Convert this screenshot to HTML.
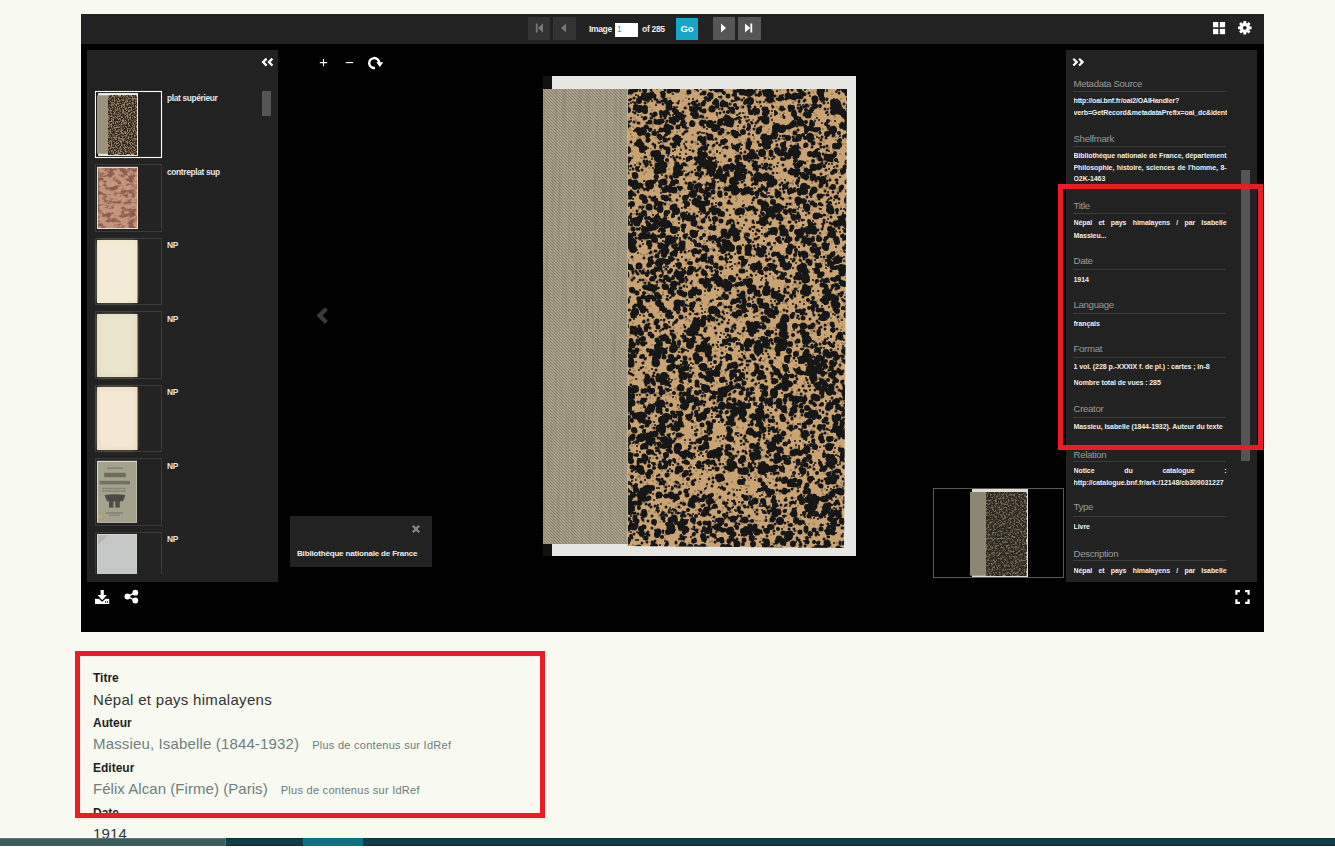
<!DOCTYPE html>
<html><head><meta charset="utf-8">
<style>
*{box-sizing:border-box;margin:0;padding:0}
html,body{width:1335px;height:851px;overflow:hidden;background:#f8f9f0;font-family:"Liberation Sans",sans-serif}
.a{position:absolute}
#frame{left:81px;top:14px;width:1183px;height:618px;background:#000}
#tb{left:81px;top:14px;width:1183px;height:30px;background:#222}
.btn{top:17px;width:22px;height:23px}
.dis{background:#333}
.en{background:#555}
#lp{left:87px;top:50px;width:191px;height:532px;background:#222}
#rp{left:1066px;top:50px;width:191px;height:532px;background:#222}
.tbox{left:95px;width:67px;height:67px;border:1px solid #3a3a3a}
.timg{left:97px;width:41px;height:63px}
.tlab{left:167px;margin-top:0.5px;font-size:8.4px;font-weight:bold;color:#e6e6e6;letter-spacing:-0.35px}
.red{border:5px solid #ed1c24}
.ml{left:7.5px;font-size:9.6px;color:#9a9a9a;letter-spacing:-0.3px;white-space:nowrap}
.mv{left:7.5px;width:153px;font-size:7px;font-weight:bold;color:#eee;line-height:11.5px;white-space:nowrap;overflow:hidden;letter-spacing:-0.07px}
.j{text-align:justify;text-align-last:justify}
.bl{left:93px;font-size:12px;font-weight:bold;color:#1e1e1e}
.bv{left:93px;font-size:15px;color:#333;letter-spacing:0.15px;white-space:nowrap}
.bt{color:#6e7f80}
.idref{font-size:11px;color:#6b7b7b;letter-spacing:0.27px}
</style></head><body>
<div id="frame" class="a"></div>
<div id="tb" class="a"></div>
<!-- nav buttons -->
<div class="a btn dis" style="left:528px"></div>
<div class="a btn dis" style="left:553px;width:23px"></div>
<div class="a btn en" style="left:713px"></div>
<div class="a btn en" style="left:738px;width:23px"></div>
<svg class="a" style="left:0;top:0" width="1335" height="60">
  <!-- first -->
  <rect x="535.8" y="23.5" width="1.8" height="9" fill="#777"/>
  <path d="M543 23.5 L537.8 28 L543 32.5Z" fill="#777"/>
  <!-- prev -->
  <path d="M566 23.5 L561 28 L566 32.5Z" fill="#777"/>
  <!-- next -->
  <path d="M721 23.5 L726 28 L721 32.5Z" fill="#fff"/>
  <!-- last -->
  <path d="M745 23.5 L750.2 28 L745 32.5Z" fill="#fff"/>
  <rect x="750.4" y="23.5" width="1.8" height="9" fill="#fff"/>
  <!-- grid -->
  <rect x="1213" y="22" width="5.3" height="5.3" fill="#fff"/>
  <rect x="1219.8" y="22" width="5.3" height="5.3" fill="#fff"/>
  <rect x="1213" y="28.9" width="5.3" height="5.3" fill="#fff"/>
  <rect x="1219.8" y="28.9" width="5.3" height="5.3" fill="#fff"/>
  <g transform="translate(1244.8,27.8)">
    <path fill="#fff" fill-rule="evenodd" d="M-1.48 -4.78 L-1.37 -6.76 L1.37 -6.76 L1.48 -4.78 L2.33 -4.42 L3.81 -5.75 L5.75 -3.81 L4.42 -2.33 L4.78 -1.48 L6.76 -1.37 L6.76 1.37 L4.78 1.48 L4.42 2.33 L5.75 3.81 L3.81 5.75 L2.33 4.42 L1.48 4.78 L1.37 6.76 L-1.37 6.76 L-1.48 4.78 L-2.33 4.42 L-3.81 5.75 L-5.75 3.81 L-4.42 2.33 L-4.78 1.48 L-6.76 1.37 L-6.76 -1.37 L-4.78 -1.48 L-4.42 -2.33 L-5.75 -3.81 L-3.81 -5.75 L-2.33 -4.42Z M1.9 0 A1.9 1.9 0 1 0 -1.9 0 A1.9 1.9 0 1 0 1.9 0Z"/>
  </g>
</svg>
<div class="a" style="left:589px;top:24px;font-size:8.5px;font-weight:bold;color:#eee;letter-spacing:-0.35px">Image</div>
<div class="a" style="left:615px;top:23px;width:23px;height:14px;background:#fff;font-size:8.5px;color:#888;padding-left:2px;line-height:13px">1</div>
<div class="a" style="left:642px;top:24px;font-size:8.5px;font-weight:bold;color:#eee;letter-spacing:-0.3px">of 285</div>
<div class="a" style="left:676px;top:18px;width:22px;height:22px;background:#14a5c9;color:#fff;font-size:9.5px;font-weight:bold;text-align:center;line-height:22px">Go</div>

<div id="lp" class="a"></div>
<div id="rp" class="a"></div>
<div class="a" style="left:1066px;top:50px;width:191px;height:532px;overflow:hidden">
<div class="a ml" style="top:27.9px">Metadata Source</div>
<div class="a" style="left:7px;top:41px;width:153px;height:1px;background:#3c3c3c"></div>
<div class="a mv" style="top:44.7px;letter-spacing:-0.13px">http://oai.bnf.fr/oai2/OAIHandler?</div>
<div class="a mv" style="top:56.5px;letter-spacing:-0.1px">verb=GetRecord&amp;metadataPrefix=oai_dc&amp;identifier=ark:/12148/cb309031227</div>
<div class="a ml" style="top:83.1px">Shelfmark</div>
<div class="a" style="left:7px;top:96px;width:153px;height:1px;background:#3c3c3c"></div>
<div class="a mv j" style="top:100.2px">Bibliothèque nationale de France, département</div>
<div class="a mv j" style="top:111.7px">Philosophie, histoire, sciences de l'homme, 8-</div>
<div class="a mv" style="top:123.2px">O2K-1463</div>
<div class="a ml" style="top:150.2px">Title</div>
<div class="a" style="left:7px;top:163px;width:153px;height:1px;background:#3c3c3c"></div>
<div class="a mv j" style="top:167.2px">Népal et pays himalayens / par Isabelle</div>
<div class="a mv" style="top:179.7px">Massieu...</div>
<div class="a ml" style="top:205.2px">Date</div>
<div class="a" style="left:7px;top:219px;width:153px;height:1px;background:#3c3c3c"></div>
<div class="a mv" style="top:223.8px">1914</div>
<div class="a ml" style="top:249.2px">Language</div>
<div class="a" style="left:7px;top:263px;width:153px;height:1px;background:#3c3c3c"></div>
<div class="a mv" style="top:267.6px">français</div>
<div class="a ml" style="top:293.2px">Format</div>
<div class="a" style="left:7px;top:307px;width:153px;height:1px;background:#3c3c3c"></div>
<div class="a mv" style="top:311.4px">1 vol. (228 p.-XXXIX f. de pl.) : cartes ; in-8</div>
<div class="a mv" style="top:326.5px">Nombre total de vues : 285</div>
<div class="a ml" style="top:353.2px">Creator</div>
<div class="a" style="left:7px;top:367px;width:153px;height:1px;background:#3c3c3c"></div>
<div class="a mv" style="top:370.6px">Massieu, Isabelle (1844-1932). Auteur du texte</div>
<div class="a ml" style="top:399.2px">Relation</div>
<div class="a" style="left:7px;top:411px;width:153px;height:1px;background:#3c3c3c"></div>
<div class="a mv j" style="top:414.5px">Notice du catalogue :</div>
<div class="a mv" style="top:426.8px">http://catalogue.bnf.fr/ark:/12148/cb309031227</div>
<div class="a ml" style="top:451.2px">Type</div>
<div class="a" style="left:7px;top:466px;width:153px;height:1px;background:#3c3c3c"></div>
<div class="a mv" style="top:470.7px">Livre</div>
<div class="a ml" style="top:498.4px">Description</div>
<div class="a" style="left:7px;top:510px;width:153px;height:1px;background:#3c3c3c"></div>
<div class="a mv j" style="top:514.8px">Népal et pays himalayens / par Isabelle</div>
<div class="a" style="left:175px;top:120px;width:9px;height:291px;background:#555"></div>
</div>
<!-- LEFT PANEL -->
<svg class="a" style="left:0;top:0" width="400" height="640">
  <defs>
    <filter color-interpolation-filters="sRGB" id="mm" x="0" y="0" width="100%" height="100%">
      <feTurbulence type="fractalNoise" baseFrequency="0.7" numOctaves="2" seed="4"/>
      <feColorMatrix type="matrix" values="0 0 0 0 0.16  0 0 0 0 0.14  0 0 0 0 0.12  -5 0 0 0 3.1"/>
    </filter>
    <filter color-interpolation-filters="sRGB" id="pm" x="0" y="0" width="100%" height="100%">
      <feTurbulence type="fractalNoise" baseFrequency="0.14 0.22" numOctaves="3" seed="9"/>
      <feColorMatrix type="matrix" values="0 0 0 0 0.56  0 0 0 0 0.36  0 0 0 0 0.29  -5 0 0 0 2.75"/>
    </filter>
    <filter id="sf" x="-20%" y="-20%" width="140%" height="140%"><feGaussianBlur stdDeviation="2.5"/></filter>
  </defs>
  <!-- collapse << -->
  <path d="M266.6 58.6 L263.1 62.1 L266.6 65.6 M272.4 58.6 L268.9 62.1 L272.4 65.6" stroke="#fff" stroke-width="2.2" fill="none"/>
  <!-- scrollbar -->
  <rect x="262" y="91" width="9" height="25" fill="#555"/>
  <!-- thumb 1 -->
  <rect x="95.5" y="91.5" width="66" height="66" fill="none" stroke="#fff" stroke-width="1.1"/>
  <rect x="97" y="93" width="41" height="63" fill="#e9e7e1"/>
  <rect x="96.6" y="93" width="1.5" height="63" fill="#111"/>
  <rect x="97" y="95.3" width="11" height="58.5" fill="#9a927c"/>
  <rect x="108" y="95.3" width="29" height="59.2" fill="#9c8060"/>
  <rect x="108" y="95.3" width="29" height="59.2" filter="url(#mm)"/>
  <!-- thumb 2 -->
  <rect x="95.5" y="164.5" width="66" height="67" fill="none" stroke="#3a3a3a"/>
  <rect x="97" y="166.8" width="41" height="62.2" fill="#e2ddd2"/>
  <rect x="98" y="168" width="39" height="60" fill="#c49680"/>
  <rect x="98" y="168" width="39" height="60" filter="url(#pm)"/>
  <rect x="98" y="170" width="1" height="40" fill="#6a5a52" opacity="0.6"/>
  <!-- thumb 3 -->
  <rect x="95.5" y="238.5" width="66" height="66" fill="none" stroke="#3a3a3a"/>
  <rect x="97" y="240" width="40.5" height="63" fill="#f0e6c9"/>
  <rect x="99" y="242" width="36" height="59" fill="#f4ecd8" filter="url(#sf)"/>
  <!-- thumb 4 -->
  <rect x="95.5" y="311.5" width="66" height="67" fill="none" stroke="#3a3a3a"/>
  <rect x="97" y="314" width="40.5" height="63" fill="#e5dcbc"/>
  <rect x="99" y="316" width="36" height="59" fill="#ebe5ce" filter="url(#sf)"/>
  <!-- thumb 5 -->
  <rect x="95.5" y="385.5" width="66" height="66" fill="none" stroke="#3a3a3a"/>
  <rect x="97" y="387" width="40.5" height="63" fill="#f0dcc2"/>
  <rect x="99" y="389" width="36" height="59" fill="#f4e8d4" filter="url(#sf)"/>
  <!-- thumb 6 -->
  <rect x="95.5" y="458.5" width="66" height="67" fill="none" stroke="#3a3a3a"/>
  <rect x="97" y="460.8" width="40" height="62" fill="#d8d6cc"/>
  <rect x="98" y="462" width="38.5" height="60" fill="#a3a28c"/>
  <rect x="107" y="467.5" width="16" height="1.2" fill="#7a7866"/>
  <rect x="104.2" y="472.8" width="21.6" height="4.4" fill="#6e6c5c"/>
  <rect x="99.5" y="480.8" width="30.5" height="3.6" fill="#727060"/>
  <rect x="102" y="487.8" width="24" height="1.4" fill="#85837a"/>
  <rect x="102" y="490.4" width="24" height="1.4" fill="#85837a"/>
  <path d="M104.6 495 Q115 493.5 125.4 495 L123 501.2 H107Z" fill="#4a4a44"/>
  <rect x="109" y="501" width="4.5" height="6.6" fill="#4e4e48"/>
  <rect x="115.3" y="501" width="4.5" height="6.6" fill="#4e4e48"/>
  <rect x="106" y="512.3" width="17" height="1.3" fill="#7e7c6e"/>
  <rect x="109" y="514.6" width="11" height="1.2" fill="#85837a"/>
  <circle cx="100.3" cy="516.4" r="2.2" fill="#c9a46c"/>
  <!-- thumb 7 -->
  <path d="M95.5 574 V532.5 H161.5 V574" fill="none" stroke="#3a3a3a"/>
  <rect x="97" y="534" width="40" height="40" fill="#d9d6ca"/><rect x="98" y="535" width="38.5" height="39" fill="#c4c7c5"/><path d="M98 535 L108 535 L98 545Z" fill="#b0aa9c" opacity="0.6"/>
</svg>
<div class="a tlab" style="top:92px">plat supérieur</div>
<div class="a tlab" style="top:166px">contreplat sup</div>
<div class="a tlab" style="top:239px">NP</div>
<div class="a tlab" style="top:313px">NP</div>
<div class="a tlab" style="top:386px">NP</div>
<div class="a tlab" style="top:460px">NP</div>
<div class="a tlab" style="top:533px">NP</div>

<!-- VIEWER CONTROLS -->
<svg class="a" style="left:300px;top:50px" width="60" height="25">
  <path d="M19.8 12.6 h7.4 M23.5 8.9 v7.4" stroke="#fff" stroke-width="1.1" fill="none"/>
  <path d="M45.8 12.6 h7.4" stroke="#fff" stroke-width="1.1" fill="none"/>
</svg>
<svg class="a" style="left:366.6px;top:55px" width="18" height="17">
  <path d="M12.2 8 A5 5 0 1 0 8 13" stroke="#fff" stroke-width="2.4" fill="none"/>
  <path d="M9.3 7.2 L16.3 7.2 L12.8 11.9Z" fill="#fff"/>
</svg>
<!-- chevron left -->
<svg class="a" style="left:310px;top:300px" width="25" height="30">
  <path d="M16.4 8.7 L9.5 15.6 L16.4 22.5" stroke="#3a3a3a" stroke-width="4.2" fill="none"/>
</svg>

<!-- BOOK IMAGE -->
<svg class="a" style="left:543px;top:76px" width="313" height="480">
  <defs>
    <filter color-interpolation-filters="sRGB" id="ln" x="0" y="0" width="100%" height="100%">
      <feTurbulence type="fractalNoise" baseFrequency="0.35 0.012" numOctaves="2" seed="2"/>
      <feColorMatrix type="matrix" values="0 0 0 0 0.3  0 0 0 0 0.28  0 0 0 0 0.22  -0.4 0 0 0 0.22"/>
    </filter>
    <clipPath id="cp"><path d="M85 13 L304 13 L301 472 L85 470Z"/></clipPath>
    <filter id="bl" x="-2%" y="-2%" width="104%" height="104%"><feGaussianBlur stdDeviation="0.45"/></filter>
  </defs>
  <rect x="0" y="0" width="313" height="480" fill="#e6e6e3"/>
  <rect x="0" y="0" width="9" height="13" fill="#111"/>
  <rect x="0" y="468" width="9" height="12" fill="#111"/>
  <pattern id="wv" width="3" height="3" patternUnits="userSpaceOnUse"><rect width="3" height="3" fill="#a49c84"/><rect width="1" height="1" fill="#8c8470"/><rect x="1" y="1" width="1" height="1" fill="#8c8470"/><rect x="2" y="2" width="1" height="1" fill="#8c8470"/><rect x="2" y="0" width="1" height="1" fill="#b2aa94"/><rect x="0" y="1" width="1" height="1" fill="#b2aa94"/></pattern>
  <rect x="0" y="13" width="84.5" height="455" fill="url(#wv)"/>
  <rect x="0" y="13" width="84.5" height="455" filter="url(#ln)"/>
  <path d="M84.5 13 L304 13 L301 472 L84.5 470Z" fill="#c9a372"/>
  <g clip-path="url(#cp)"><g filter="url(#bl)"><g transform="translate(84,12)" stroke="#131418" stroke-linecap="round" fill="none">
<path d="M179 378h0M156 215h0M10 291h0M24 77h0M62 172h0M198 132h0M104 47h0M46 400h0M132 323h0M96 49h0M197 73h0M88 156h0M142 307h0M39 312h0M8 418h0M165 95h0M107 434h0M172 230h0M3 387h0M85 110h0M0 287h0M161 333h0M110 176h0M218 268h0M192 395h0M16 395h0M219 164h0M38 291h0M89 279h0M106 373h0M56 72h0M88 263h0M195 401h0M156 63h0M47 150h0M76 87h0M125 161h0M119 61h0M211 258h0M141 69h0M70 80h0M208 267h0M107 317h0M114 417h0M108 199h0M121 99h0M2 73h0M77 134h0M64 208h0M63 171h0M10 96h0M100 163h0M203 90h0M33 11h0M57 224h0M91 189h0M182 436h0M178 46h0M134 367h0M61 292h0M30 81h0M206 62h0M59 408h0M185 241h0M82 351h0M79 113h0M72 285h0M143 54h0M187 185h0M194 310h0M74 49h0M110 200h0M7 221h0M4 32h0M25 326h0M149 417h0M11 147h0M92 209h0M119 174h0M115 436h0M77 96h0M88 239h0M192 363h0M193 159h0M198 401h0M63 333h0M145 436h0M190 294h0M180 187h0M147 228h0M185 245h0M52 320h0M94 324h0M79 422h0M205 154h0M174 26h0M211 12h0M96 101h0M72 377h0M41 74h0M18 388h0M10 329h0M146 0h0M44 239h0M81 320h0M109 72h0M199 12h0M127 422h0M112 208h0M8 327h0M197 297h0M144 158h0M206 350h0M91 439h0M121 202h0M90 392h0M116 356h0M25 274h0M122 417h0M152 189h0M157 25h0M220 283h0M77 156h0M200 237h0M61 442h0M51 1h0M61 286h0M49 141h0M119 373h0M145 43h0M200 128h0M157 166h0M75 344h0M19 214h0M138 53h0M93 227h0M6 414h0M30 139h0M118 417h0M148 51h0M190 359h0M38 94h0M214 193h0M197 212h0M156 280h0M191 98h0M128 299h0M20 152h0M102 371h0M97 395h0M118 397h0M84 110h0M58 367h0M52 381h0M134 108h0M26 165h0M80 384h0M125 127h0M185 361h0M64 248h0M53 225h0M79 3h0M153 212h0M208 40h0M133 237h0M45 34h0M1 386h0M112 330h0M168 13h0M164 64h0M63 256h0M43 330h0M44 306h0M89 21h0M51 139h0M90 295h0M149 383h0M176 187h0M215 255h0M87 66h0M169 277h0M55 273h0M73 405h0M148 336h0M23 19h0M119 208h0M193 276h0M35 305h0M93 160h0M56 392h0M78 155h0M119 360h0M201 346h0M125 161h0M72 403h0M41 383h0M90 316h0M140 454h0M63 19h0M197 272h0M11 389h0M108 259h0M195 100h0M155 432h0M83 198h0M40 196h0M187 193h0M152 85h0M2 348h0M34 62h0M213 422h0M66 77h0M10 220h0M41 109h0M210 101h0M215 412h0M94 386h0M183 167h0M40 182h0M43 228h0M123 0h0M69 321h0M154 358h0M37 103h0M213 321h0M153 2h0M213 386h0M186 9h0M41 273h0M160 60h0M193 439h0M176 120h0M166 86h0M146 189h0M122 12h0M162 98h0M146 418h0M90 454h0M176 355h0M59 232h0M141 44h0M139 433h0M168 172h0M103 29h0M151 343h0M81 83h0M140 338h0M51 217h0M85 50h0M60 397h0M18 392h0M9 439h0M164 122h0M207 269h0M184 243h0M196 5h0M29 155h0M124 74h0M197 215h0M149 211h0M169 122h0M109 220h0M22 315h0M104 213h0M150 8h0M13 390h0M136 336h0M84 329h0M209 49h0M129 12h0M135 340h0M8 356h0M88 450h0M12 74h0M65 359h0M108 284h0M206 181h0M110 178h0M42 302h0M44 315h0M212 234h0M217 172h0M59 18h0M91 306h0M140 351h0M188 136h0M151 339h0M151 343h0M106 402h0M23 193h0M134 108h0M97 156h0M139 184h0M12 388h0M22 373h0M26 36h0M18 339h0M89 20h0M197 199h0M210 305h0M22 38h0M55 450h0M62 117h0M141 253h0M113 215h0M98 426h0M220 133h0M59 176h0M163 442h0M159 68h0M107 453h0M216 314h0M209 156h0M122 35h0M206 60h0M51 306h0M188 47h0M152 262h0M97 377h0M174 243h0M161 219h0M84 168h0M95 380h0M114 72h0M59 161h0M81 217h0M179 438h0M202 154h0M166 15h0M62 232h0M99 177h0M179 175h0M130 256h0M191 44h0M121 302h0M75 311h0M6 138h0M115 246h0M204 178h0M32 80h0M99 78h0M199 13h0M44 461h0M143 15h0M194 271h0M162 275h0M170 68h0M1 33h0M114 205h0M66 47h0M43 386h0M30 377h0M81 273h0M7 30h0M1 452h0M140 148h0M196 184h0M122 374h0M117 296h0M73 425h0M31 425h0M32 314h0M61 88h0M178 55h0M56 268h0M202 26h0M203 280h0M88 432h0M118 120h0M222 203h0M45 461h0M186 351h0M147 404h0M195 403h0M11 458h0M120 304h0M206 119h0M169 120h0M200 145h0M212 434h0M122 121h0M71 194h0M167 101h0M74 30h0M219 56h0M169 55h0M221 104h0M75 282h0M81 13h0M52 371h0M60 198h0M185 122h0M56 280h0M157 419h0M22 283h0M101 101h0M147 312h0M5 189h0M41 212h0M21 51h0M102 384h0M51 3h0M48 24h0M175 100h0M16 292h0M172 199h0M53 388h0M137 181h0M26 65h0M150 140h0M208 29h0M16 253h0M209 330h0M190 71h0M63 351h0M37 11h0M125 156h0M75 424h0M163 135h0M5 272h0M42 75h0M153 298h0M32 441h0M9 133h0M114 234h0M158 11h0M143 102h0M90 18h0M31 249h0M20 193h0M190 242h0M21 144h0M17 342h0M121 255h0M62 104h0M30 15h0M123 3h0M90 79h0M197 442h0M190 412h0M26 295h0M87 51h0M100 279h0M61 147h0M29 181h0M214 86h0M142 421h0M59 107h0M207 306h0M68 3h0M94 261h0M78 21h0M48 37h0M202 207h0M208 262h0M172 181h0M16 79h0M189 112h0M132 411h0M38 76h0M25 6h0M43 241h0M197 385h0M80 336h0M68 203h0M166 280h0M65 356h0M45 243h0M162 370h0M40 389h0M141 394h0M2 444h0M205 460h0M9 226h0M182 182h0M19 446h0M38 231h0M164 424h0M192 443h0M45 338h0M73 159h0M180 73h0M142 41h0M77 403h0M86 160h0M117 448h0M63 270h0M127 297h0M135 216h0M221 40h0M94 20h0M28 178h0M102 345h0M204 33h0M193 147h0M29 97h0M18 152h0M111 145h0M134 7h0M20 127h0M149 121h0M142 310h0M78 88h0M4 53h0M83 214h0M17 103h0M215 334h0M206 387h0M155 449h0M60 432h0M187 259h0M59 196h0M117 145h0M136 273h0M74 52h0M79 259h0M69 94h0M128 120h0M36 118h0M218 305h0M168 316h0M214 408h0M126 54h0M160 2h0M182 447h0M38 451h0M52 29h0M25 205h0M213 134h0M96 288h0M81 35h0M29 457h0M221 362h0M111 141h0M208 271h0M4 369h0M12 316h0M128 389h0M92 137h0M57 347h0M199 419h0M35 305h0M58 32h0M134 157h0M174 156h0M72 31h0M38 171h0M137 315h0M166 240h0M173 461h0M204 42h0M39 241h0M162 328h0M27 103h0M71 91h0M117 448h0M150 61h0M182 256h0M189 321h0M73 20h0M36 190h0M39 21h0M138 216h0M184 431h0M120 401h0M45 324h0M92 84h0M6 235h0M83 454h0M193 309h0M202 405h0M162 248h0M131 437h0M12 121h0M149 143h0M124 416h0M69 338h0M9 238h0M154 91h0M131 441h0M83 121h0M132 237h0M159 389h0M47 256h0M17 274h0M216 86h0M133 351h0M178 103h0M144 210h0M167 461h0M3 137h0M175 76h0M75 80h0M165 259h0M150 57h0M212 233h0M59 210h0M183 331h0M9 407h0M60 3h0M152 65h0M14 27h0M195 259h0M124 19h0M17 118h0M149 392h0M14 244h0M90 269h0M38 369h0M139 119h0M132 16h0M136 99h0M185 199h0M84 238h0M176 74h0M71 241h0M102 77h0M48 148h0M69 26h0M207 350h0M9 10h0M99 160h0M167 437h0M123 41h0M11 432h0M144 330h0M119 243h0M209 52h0M6 431h0M144 141h0M25 257h0M98 251h0M107 97h0M84 340h0M96 216h0M64 59h0M35 137h0M212 421h0M68 335h0M51 357h0M198 175h0M30 279h0M110 132h0M25 124h0M177 157h0M54 350h0M186 298h0M5 330h0M222 446h0M146 459h0M208 323h0M86 21h0M28 149h0M50 105h0M112 462h0M143 325h0M21 109h0M196 267h0M202 449h0M137 207h0M185 65h0M112 65h0M72 441h0M120 69h0M10 186h0M118 265h0M117 289h0M184 215h0M18 131h0M57 371h0M15 253h0M222 364h0M164 348h0M14 246h0M73 130h0M83 147h0M63 369h0M106 58h0M45 44h0M162 321h0M164 389h0M137 8h0M215 230h0M209 52h0M214 129h0M165 132h0M204 138h0M13 49h0M221 307h0M217 256h0M179 262h0M85 387h0M20 332h0M42 235h0M192 260h0M163 274h0M169 68h0M97 349h0M151 388h0M57 453h0M214 364h0M104 134h0M83 183h0M211 388h0M18 45h0M187 25h0M164 121h0M142 240h0M78 406h0M221 332h0M1 31h0M159 7h0M99 56h0M131 418h0M154 144h0M127 432h0M154 224h0M179 310h0M120 398h0M180 125h0M94 38h0M2 433h0M216 30h0M176 141h0M121 99h0M16 227h0M79 15h0M28 78h0M181 106h0M159 122h0M43 295h0M181 6h0M168 115h0M49 143h0M58 281h0M221 372h0M180 446h0M64 461h0M219 136h0M34 228h0M4 90h0M166 400h0M158 21h0M169 202h0M146 355h0M114 414h0M126 314h0M174 224h0M140 370h0M219 120h0M98 177h0M89 25h0M141 401h0M20 395h0M57 44h0M97 67h0M168 381h0M138 271h0M156 18h0M34 356h0M203 339h0M172 163h0M191 289h0M120 366h0M41 318h0M157 424h0M177 284h0M14 102h0M7 269h0M212 351h0M42 348h0M148 157h0M95 181h0M98 285h0M182 215h0M158 43h0M45 3h0M78 14h0M158 253h0M204 230h0M26 304h0M31 449h0M130 208h0M214 313h0M127 221h0M212 49h0M74 251h0M108 353h0M21 159h0M154 280h0M27 35h0M76 449h0M123 43h0M135 300h0M15 301h0M215 147h0M202 60h0M190 270h0M18 243h0M148 386h0M131 266h0M222 48h0M95 92h0M64 88h0M86 319h0M204 224h0M7 283h0M169 185h0M47 425h0M169 227h0M162 204h0M49 291h0M137 329h0M37 198h0M140 82h0M14 251h0M115 417h0M7 58h0M181 99h0M107 402h0M25 337h0M36 206h0M95 423h0M48 36h0M20 205h0M165 115h0M103 83h0M10 12h0M73 326h0M22 298h0M159 138h0M100 142h0M158 316h0M115 103h0M174 120h0M73 262h0M82 262h0M156 22h0M221 381h0M139 141h0M96 172h0M28 74h0M22 80h0M201 228h0M75 215h0M214 242h0M69 422h0M147 398h0M26 38h0M20 70h0M90 104h0M181 115h0M158 198h0M182 177h0M67 126h0M134 453h0M204 457h0M125 343h0M190 180h0M113 144h0M84 417h0M138 146h0M108 242h0M175 148h0M181 174h0M106 363h0M214 163h0M161 271h0M144 128h0M12 176h0M29 130h0M185 343h0M114 54h0M180 428h0M99 196h0M193 396h0M72 158h0M141 145h0M215 349h0M167 318h0M88 234h0M15 117h0M177 294h0M95 141h0M30 266h0M181 372h0M95 455h0M17 389h0M126 32h0M170 303h0M156 276h0M197 378h0M78 310h0M147 109h0M156 60h0M106 238h0M96 234h0M3 293h0M113 299h0M41 14h0M146 272h0M69 209h0M159 10h0M190 70h0M112 43h0M105 252h0M49 309h0M129 437h0M96 420h0M117 419h0M30 308h0M199 436h0M60 417h0M108 24h0M59 206h0M139 12h0M33 245h0M157 280h0M29 458h0M87 436h0M3 280h0M121 379h0M198 426h0M119 107h0M130 433h0M147 61h0M13 209h0M171 200h0M110 409h0M72 261h0M162 43h0M48 440h0M159 331h0M215 246h0M221 458h0M139 452h0M18 183h0M29 15h0M56 390h0M141 85h0M94 440h0M209 334h0M179 454h0M193 317h0M47 394h0M131 35h0M3 275h0M210 455h0M121 333h0M180 26h0M198 250h0M155 327h0M30 395h0M101 98h0M1 248h0M121 381h0M116 416h0M55 322h0M153 239h0M83 269h0M122 407h0M33 434h0M185 168h0M111 57h0M136 214h0M96 431h0M41 88h0M16 250h0M190 362h0M207 13h0M63 378h0M93 396h0M210 104h0M81 188h0M214 457h0M37 434h0M29 422h0M61 376h0M165 251h0M206 302h0M61 259h0M42 171h0M40 304h0M33 195h0M75 35h0M25 47h0M146 37h0M12 147h0M185 240h0M107 235h0M36 204h0M163 65h0M49 278h0M203 20h0M148 14h0M134 450h0M60 395h0M18 93h0M54 60h0M197 378h0M129 296h0M184 460h0M58 208h0M187 258h0M64 162h0M81 266h0M91 462h0M105 424h0M32 256h0M133 316h0M54 296h0M23 218h0M67 451h0M219 273h0M14 262h0M29 266h0M70 54h0M183 17h0M182 92h0M88 199h0M15 64h0M50 245h0M51 350h0M166 67h0M116 219h0M199 302h0M124 438h0M52 452h0M93 292h0M189 375h0M208 12h0M57 404h0M153 172h0M114 290h0M72 226h0M59 20h0M117 120h0M221 59h0M214 274h0M91 42h0M99 416h0M131 459h0M23 47h0M190 441h0M97 348h0M89 412h0M140 157h0M35 210h0M83 103h0M48 291h0M45 351h0M48 47h0M30 116h0M197 101h0M157 146h0M33 39h0M90 132h0M37 104h0M149 406h0M39 425h0M15 70h0M97 80h0M33 4h0M28 352h0M96 120h0M217 296h0M81 224h0M149 271h0M150 19h0M99 195h0M218 221h0M219 23h0M216 312h0M204 230h0M151 79h0M132 290h0M96 99h0M81 336h0M96 16h0M38 224h0M124 301h0M8 257h0M158 67h0M2 351h0M46 235h0M146 445h0M145 215h0M92 127h0M55 228h0M181 189h0M85 419h0M187 430h0M83 195h0M220 94h0M5 358h0M171 149h0M126 148h0M104 32h0M139 171h0M70 231h0M90 444h0M84 437h0M162 372h0M10 366h0M49 171h0M215 128h0M34 102h0M6 39h0M119 32h0M154 350h0M65 243h0M60 247h0M167 43h0M158 427h0M213 66h0M59 89h0M3 134h0M47 155h0M168 57h0M142 434h0M6 350h0M41 352h0M184 430h0M34 62h0M175 380h0M83 350h0M101 363h0M61 7h0M118 55h0M181 445h0M73 416h0M37 219h0M37 183h0M110 111h0M63 382h0M34 42h0M28 197h0M101 73h0M6 68h0M71 242h0M95 201h0M186 266h0M80 231h0M59 331h0M188 296h0M131 156h0M2 234h0M134 230h0M25 185h0M41 224h0M156 29h0M163 163h0M38 298h0M195 253h0M168 28h0M15 45h0M201 88h0M15 125h0M0 405h0M8 458h0M153 347h0M23 322h0M220 312h0M108 333h0M110 294h0M216 286h0M96 379h0M214 89h0M200 90h0M177 303h0M122 329h0M63 415h0M181 73h0M66 406h0M194 146h0M10 75h0M192 377h0M94 74h0M84 299h0M89 367h0M97 157h0M192 409h0M53 99h0M211 170h0M2 433h0M190 459h0M151 167h0M29 36h0M136 394h0M210 144h0M25 184h0M103 430h0M16 109h0M196 309h0M150 53h0M174 3h0M166 14h0M22 423h0M147 283h0M7 380h0M148 459h0M150 216h0M142 164h0M95 276h0M169 221h0M175 306h0M150 457h0M54 124h0M51 328h0M64 130h0M190 286h0M17 86h0M201 87h0M49 80h0M70 86h0M39 176h0M16 375h0M176 366h0M145 455h0M87 292h0M11 24h0M5 63h0M83 145h0M7 126h0M97 104h0M51 172h0M41 231h0M198 368h0M49 56h0M36 347h0M108 278h0M166 336h0M178 192h0M211 227h0M158 68h0M5 400h0M149 256h0M191 70h0M71 425h0M15 410h0M123 67h0M6 365h0M127 272h0M114 399h0M184 411h0M43 86h0M190 47h0M63 121h0M128 311h0M144 328h0M108 221h0M123 366h0M2 152h0M129 161h0M114 429h0M37 110h0M185 342h0M163 51h0M178 157h0M116 173h0M130 220h0M57 113h0M122 392h0M104 280h0M36 110h0M138 315h0M170 443h0M63 240h0M58 102h0M116 128h0M141 390h0M82 202h0M185 254h0M211 210h0M69 56h0M8 306h0M109 113h0M205 98h0M149 126h0M16 195h0M131 62h0M175 35h0M44 317h0M47 240h0M84 3h0M4 7h0M138 334h0M84 290h0M129 296h0M145 16h0M167 73h0M82 52h0M139 46h0M139 85h0M124 344h0M135 128h0M6 280h0M12 306h0M22 206h0M57 55h0M122 189h0M187 436h0M197 54h0M49 433h0M133 371h0M101 426h0M111 332h0M184 450h0M88 109h0M160 170h0M191 416h0M151 41h0M112 52h0M213 169h0M169 359h0M170 197h0M216 183h0M193 21h0M178 375h0M33 222h0M129 433h0M101 381h0M76 27h0M159 214h0M102 405h0M47 51h0M73 217h0M110 281h0M57 230h0M129 92h0M121 171h0M112 189h0M93 103h0M119 127h0M92 57h0M192 224h0M55 444h0M126 253h0M175 80h0M206 328h0M29 211h0M150 107h0M3 296h0M126 370h0M86 381h0M140 178h0M116 282h0M69 151h0M108 296h0M21 161h0M166 197h0M193 322h0M102 103h0M34 176h0M163 205h0M32 428h0M57 454h0M40 262h0M60 427h0M118 432h0M78 78h0M119 52h0M136 81h0M162 0h0M62 209h0M151 301h0M89 326h0M70 242h0M30 312h0M206 314h0M220 91h0M99 47h0M161 170h0M55 115h0M205 13h0M87 118h0M99 209h0M61 422h0M204 210h0M74 178h0M31 376h0M60 113h0M8 104h0M57 259h0M36 97h0M56 280h0M116 457h0M71 128h0M222 312h0M213 431h0M221 127h0M91 400h0M39 125h0M114 20h0M206 409h0M161 302h0M117 389h0M122 315h0M59 165h0M180 89h0M56 326h0M165 102h0M199 375h0M49 178h0M84 161h0M38 447h0M177 334h0M134 392h0M144 338h0M21 387h0M25 398h0M168 49h0M85 453h0M175 432h0M14 320h0M24 374h0M58 213h0M44 97h0M191 82h0M195 272h0M73 20h0M177 260h0M67 280h0M58 92h0M210 164h0M76 308h0M171 130h0M14 70h0M86 43h0M165 202h0M195 173h0M213 17h0M110 44h0M110 214h0M161 416h0M69 383h0M92 130h0M68 54h0M52 194h0M75 266h0M35 422h0M85 430h0M222 168h0M44 50h0M99 42h0M201 191h0M109 194h0M32 97h0M81 459h0M153 406h0M111 268h0M96 222h0M26 388h0M10 349h0M173 348h0M39 321h0M160 263h0M28 243h0M97 129h0M215 398h0M79 244h0M49 419h0M111 41h0M28 175h0M169 169h0M125 363h0M194 430h0M52 261h0M92 11h0M1 56h0M12 314h0M42 415h0M186 89h0M156 146h0M68 339h0M83 5h0M135 122h0M180 388h0M6 242h0M215 239h0M98 230h0M65 47h0M28 198h0M61 245h0M4 262h0M175 427h0M59 83h0M211 24h0M132 372h0M16 208h0M219 59h0M177 137h0M48 214h0M6 187h0M158 215h0M93 353h0M108 26h0M93 353h0M64 215h0M56 13h0M47 70h0M27 118h0M49 184h0M111 28h0M112 433h0M99 147h0M191 278h0M31 312h0M149 223h0M33 163h0M40 100h0M112 47h0M42 255h0M20 15h0M127 348h0M70 107h0M27 233h0M52 205h0M188 16h0M94 11h0M133 226h0M36 207h0M160 307h0M198 88h0M44 357h0M27 169h0M22 448h0M7 428h0M130 78h0M98 97h0M107 383h0M148 411h0M89 441h0M11 7h0M133 276h0M222 235h0M90 207h0M5 49h0M201 412h0M73 152h0M106 459h0M171 148h0M19 192h0M206 15h0M195 260h0M76 197h0M50 359h0M146 6h0M92 160h0M83 345h0M108 93h0M36 328h0M105 394h0M23 307h0M31 204h0M180 250h0M32 224h0M4 225h0M87 111h0M153 288h0M12 416h0M108 356h0M213 81h0M172 149h0M189 291h0M24 306h0M6 457h0M113 139h0M177 79h0M220 401h0M149 434h0M195 50h0M116 263h0M66 210h0M53 434h0M168 49h0M196 406h0M26 393h0M74 341h0M153 147h0M21 151h0M72 134h0M113 322h0M57 31h0M169 256h0M184 334h0M157 439h0M11 50h0M92 120h0M87 67h0M110 211h0M39 374h0M197 92h0M195 290h0M200 349h0M8 347h0M140 452h0M195 176h0M156 371h0M219 42h0M178 119h0M218 40h0M139 316h0M159 94h0M132 127h0M206 151h0M190 235h0M78 61h0M131 112h0M148 334h0M131 98h0M96 441h0M61 78h0M105 190h0M69 226h0M186 4h0M144 355h0M79 175h0M115 229h0M19 29h0M18 424h0M172 141h0M17 167h0M6 405h0M64 156h0M199 157h0M122 398h0M145 2h0M54 153h0M34 300h0M191 163h0M79 45h0M43 255h0M20 74h0M53 109h0M132 348h0M133 222h0M15 216h0M1 269h0M96 334h0M211 103h0M186 378h0M48 301h0M118 37h0M185 109h0M178 244h0M42 81h0M7 323h0M121 390h0M164 375h0M18 43h0M172 159h0M78 143h0M189 27h0M112 164h0M104 303h0M57 92h0M1 184h0M82 389h0M36 55h0M214 395h0M178 164h0M55 323h0M91 102h0M45 114h0M102 79h0M6 24h0M9 80h0M41 108h0M219 206h0M178 97h0M94 100h0M35 194h0M1 260h0M164 347h0M132 300h0M78 251h0M15 208h0M105 152h0M67 313h0M67 371h0M65 451h0M172 164h0M140 107h0M194 188h0M170 125h0M41 10h0M19 313h0M44 404h0M74 346h0M86 259h0M28 296h0M47 270h0M212 85h0M208 331h0M121 371h0M144 447h0M119 401h0M152 92h0M198 196h0M206 86h0M79 80h0M100 279h0M202 44h0M178 406h0M196 291h0M169 375h0M28 424h0M56 134h0M210 461h0M77 338h0M53 447h0M146 54h0M110 70h0M20 234h0M17 50h0M28 56h0M17 96h0M166 393h0M118 100h0M23 297h0M214 232h0M218 216h0M73 163h0M121 444h0M91 5h0M16 327h0M217 47h0M182 219h0M191 55h0M221 225h0M9 184h0M3 247h0M35 317h0M80 296h0M170 138h0M126 292h0M220 222h0M56 100h0M145 31h0M168 410h0M149 58h0M198 281h0M222 423h0M52 351h0M135 262h0M176 114h0M81 175h0M79 49h0M2 308h0M137 362h0M59 6h0M77 140h0M28 299h0M70 375h0M189 244h0M84 23h0M39 191h0M102 18h0M164 164h0M95 63h0M193 151h0M102 352h0M6 11h0M126 154h0M133 348h0M139 112h0M184 177h0M120 133h0M142 15h0M64 377h0M160 124h0M159 98h0M104 336h0M143 5h0M129 104h0M21 50h0M211 82h0M136 126h0M86 232h0M59 377h0M39 373h0M157 148h0M186 19h0M87 418h0M78 207h0M120 190h0M118 193h0M212 415h0M191 157h0M155 384h0M7 22h0M147 460h0M70 414h0M77 65h0M118 282h0M73 424h0M152 164h0M34 155h0M46 159h0M63 233h0M17 366h0M195 212h0M98 188h0M202 202h0M98 371h0M188 31h0M110 457h0M115 329h0M219 455h0M184 117h0M42 405h0M112 345h0M122 452h0M13 388h0M145 26h0M72 35h0M110 294h0M45 435h0M152 386h0M112 19h0M166 310h0M170 287h0M178 296h0M201 235h0M65 197h0M124 199h0M71 270h0M205 22h0M134 98h0M209 154h0M120 106h0M131 228h0M40 179h0M191 102h0M101 432h0M61 383h0M106 417h0M44 438h0M221 237h0M32 135h0M76 290h0M118 324h0M158 120h0M110 339h0M66 452h0M154 29h0M181 5h0M137 273h0M201 283h0M30 305h0M114 35h0M173 430h0M136 77h0M9 33h0M92 380h0M218 339h0M100 134h0M201 284h0M202 323h0M48 74h0M137 211h0M138 261h0M26 4h0M218 197h0M41 341h0M82 49h0M93 327h0M221 31h0M38 34h0M8 224h0M56 413h0M126 213h0M147 167h0M71 225h0M207 145h0M111 367h0M90 38h0M221 252h0M27 31h0M192 203h0M202 275h0M179 318h0M71 177h0M179 182h0M215 439h0M50 423h0M21 99h0M80 398h0M111 340h0M104 16h0M45 374h0M77 439h0M109 190h0M32 346h0M171 218h0M91 167h0M156 277h0M49 223h0M143 147h0M52 106h0M99 168h0M65 239h0M137 27h0M115 434h0M104 26h0M89 141h0M95 283h0M220 94h0M4 425h0M25 340h0M214 242h0M89 55h0M184 315h0M132 45h0M37 116h0M132 39h0M222 161h0M164 54h0M19 300h0M135 234h0M169 94h0M126 21h0M38 434h0M100 396h0M112 221h0M64 261h0M2 142h0M103 277h0M162 430h0M147 191h0M159 186h0M171 150h0M30 213h0M14 166h0M214 103h0M162 257h0M79 382h0M211 232h0M145 167h0M91 29h0M33 80h0M125 190h0M81 22h0M204 197h0M136 369h0M116 113h0M93 366h0M136 29h0M124 446h0M51 406h0M17 71h0M136 405h0M79 359h0M213 358h0M91 410h0M147 208h0M175 248h0M8 459h0M213 279h0M68 288h0M114 313h0M144 427h0M25 302h0M133 19h0M145 112h0M64 304h0M181 192h0M199 65h0M0 113h0M89 256h0M66 386h0M38 5h0M82 215h0M40 39h0M82 140h0M59 10h0M130 348h0M102 84h0M108 329h0M83 374h0M116 157h0M75 249h0M112 418h0M72 394h0M98 400h0M197 185h0M9 330h0M142 352h0M121 212h0M158 130h0M90 421h0M114 206h0M140 115h0M18 61h0M199 285h0M143 51h0M172 263h0M129 177h0M114 66h0M38 90h0M137 182h0M189 62h0M5 392h0M112 332h0M50 44h0M176 191h0M154 420h0M96 29h0M51 187h0M166 93h0M43 10h0M112 230h0M198 375h0M56 375h0M15 275h0M177 213h0M55 297h0M73 387h0M180 191h0M54 399h0M152 237h0M192 120h0M102 59h0M105 323h0M207 287h0M148 214h0M161 219h0M109 65h0M77 153h0M176 248h0M122 22h0M144 277h0M52 321h0M77 57h0M220 13h0M46 262h0M77 307h0M143 97h0M21 362h0M99 430h0M11 409h0M170 263h0M121 446h0M74 90h0M20 166h0M79 221h0M12 356h0M103 248h0M51 416h0M162 403h0M141 425h0M12 151h0M8 86h0M165 301h0M210 206h0M22 119h0M179 367h0M181 372h0M217 405h0M206 279h0M60 54h0M107 323h0M95 15h0M62 204h0M149 240h0M103 445h0M170 306h0M42 116h0M132 350h0M70 358h0M211 106h0M39 307h0M182 148h0M191 322h0M61 296h0M107 401h0M23 310h0M102 225h0M185 291h0M87 192h0M156 151h0M4 178h0M109 314h0M67 247h0M53 43h0M38 43h0M159 299h0M173 330h0M207 121h0M8 262h0M211 411h0M62 62h0M74 48h0M86 61h0M115 296h0M174 243h0M183 296h0M218 173h0M127 49h0M105 107h0M190 236h0M23 171h0M86 312h0M40 72h0M147 109h0M43 308h0M121 385h0M82 352h0M220 10h0M133 378h0M9 355h0M46 38h0M199 167h0M136 324h0M165 273h0M89 248h0M37 305h0M129 368h0M169 155h0M148 97h0M161 338h0M167 288h0M21 113h0M207 332h0M32 216h0M221 222h0M192 72h0M130 228h0M130 315h0M126 421h0M124 259h0M216 332h0M34 375h0M165 110h0M23 145h0M118 25h0M19 405h0M156 226h0M194 258h0M12 126h0M141 202h0M167 7h0M14 350h0M178 449h0M15 3h0M94 311h0M180 177h0M186 34h0M73 195h0M165 339h0M157 298h0M16 57h0M25 70h0M144 245h0M98 257h0M172 320h0M171 205h0M112 389h0M211 189h0M190 61h0M129 387h0M200 376h0M84 273h0M124 416h0M128 385h0M217 203h0M160 446h0M102 20h0M82 269h0M196 41h0M214 119h0M188 77h0M99 343h0M63 387h0M59 53h0M37 234h0M19 453h0M177 203h0M126 32h0M175 87h0M15 254h0M199 98h0M160 216h0M98 86h0M34 187h0M164 382h0M140 15h0M190 213h0M196 164h0M3 42h0M80 241h0M51 226h0M36 448h0M128 250h0M16 181h0M192 207h0M17 182h0M183 16h0M190 424h0M149 459h0M159 196h0M68 101h0M29 50h0M103 339h0M1 319h0M84 62h0M166 96h0M87 192h0M116 192h0M217 347h0M22 212h0M93 307h0M49 311h0M189 193h0M205 6h0M68 34h0M114 18h0M42 306h0M209 335h0M4 46h0M153 12h0M214 11h0M160 199h0M145 14h0M129 228h0M40 285h0M4 253h0M134 460h0M92 57h0M120 234h0M165 117h0M52 96h0M124 293h0M33 447h0M129 110h0M65 327h0M164 122h0M46 134h0M175 61h0M84 364h0M127 51h0M143 417h0M10 246h0M129 448h0M122 282h0M108 228h0M159 392h0M160 224h0M53 197h0M220 256h0M47 255h0M149 322h0M109 200h0M168 338h0M214 401h0M155 50h0M53 104h0M126 123h0M4 132h0M9 16h0M40 54h0M86 231h0M77 306h0M80 38h0M34 294h0M153 26h0M89 353h0M116 248h0M49 15h0M213 228h0M186 379h0M211 257h0M10 242h0M145 171h0M85 35h0M134 388h0M44 424h0M86 162h0M2 360h0M22 108h0M2 200h0M104 334h0M94 153h0M38 41h0M185 95h0M165 127h0M9 32h0M94 316h0M153 312h0M34 103h0M35 36h0M129 297h0M61 164h0M129 64h0M98 110h0M93 93h0M19 84h0M61 244h0M146 283h0M20 12h0M179 143h0M202 212h0M187 81h0M97 426h0M179 49h0M45 6h0M125 221h0M90 406h0M115 457h0M30 74h0M79 254h0M188 171h0M79 110h0M40 396h0M48 344h0M2 258h0M99 374h0M90 236h0M215 24h0M6 172h0M105 401h0M201 127h0M116 306h0M188 63h0M13 373h0M89 118h0M171 418h0M152 311h0M126 407h0M181 47h0M7 260h0M91 132h0M161 64h0M186 55h0M175 378h0M183 83h0M217 252h0M3 94h0M85 405h0M48 78h0M195 79h0M143 418h0M62 455h0M202 305h0M111 331h0M155 156h0M68 392h0M50 400h0M96 428h0M47 121h0M68 403h0M42 237h0M82 153h0M34 369h0M191 190h0M135 30h0M40 426h0M47 270h0M11 102h0M80 111h0M44 190h0M25 22h0M196 209h0M194 376h0M205 300h0M54 240h0M31 54h0M86 111h0M153 224h0M196 138h0M41 130h0M5 292h0M94 277h0M201 336h0M167 27h0M93 435h0M120 305h0M113 143h0M67 448h0M148 118h0M31 192h0M96 412h0M42 190h0M140 63h0M155 275h0M215 250h0M12 119h0M81 202h0M52 255h0M159 80h0M28 458h0M209 420h0M83 363h0M19 280h0M123 169h0M176 17h0M75 57h0M194 419h0M213 410h0M199 193h0M5 342h0M58 355h0M74 448h0M43 210h0M21 45h0M99 263h0M46 223h0M90 278h0M2 346h0M189 92h0M6 183h0M139 340h0M219 104h0M121 280h0M3 328h0M167 44h0M123 65h0M143 154h0M38 137h0M127 308h0M197 342h0M222 69h0M24 61h0M104 239h0M160 110h0M88 183h0M144 365h0M187 357h0M195 124h0M81 274h0M43 392h0M125 339h0M212 419h0M39 38h0M198 247h0M39 199h0M78 31h0M23 67h0M43 96h0M6 80h0M131 141h0M131 27h0M84 262h0M46 429h0M54 333h0M81 330h0M192 251h0M204 65h0M54 420h0M100 341h0M84 142h0M161 426h0M80 174h0M109 109h0M137 433h0M211 365h0M4 262h0M17 434h0M43 43h0M51 328h0M126 363h0M132 32h0M123 236h0M46 267h0M159 326h0M80 408h0M85 290h0M6 81h0M146 261h0M62 398h0M165 243h0M43 258h0M70 201h0M81 238h0M89 367h0M71 402h0M84 150h0M93 218h0M77 253h0M96 435h0M111 421h0M220 285h0M146 391h0M198 291h0M157 454h0M173 389h0M186 355h0M37 399h0M92 430h0M93 393h0M8 183h0M98 356h0M82 120h0M116 70h0M155 51h0M149 103h0M99 105h0M68 246h0M66 326h0M217 264h0M35 383h0M167 253h0M166 180h0M6 123h0M52 227h0M10 22h0M29 446h0M96 325h0M185 171h0M105 431h0M209 132h0M60 20h0M185 81h0M90 314h0M215 316h0M178 304h0M220 49h0M44 439h0M9 218h0M197 172h0M136 78h0M133 433h0M130 389h0M151 50h0M87 297h0M17 181h0M31 78h0M132 442h0M92 425h0M178 335h0M186 330h0M219 51h0M130 214h0M45 148h0M184 80h0M186 267h0M125 218h0M164 111h0M198 150h0M76 307h0M45 113h0M3 190h0M185 409h0M209 395h0M179 418h0M190 129h0M63 84h0M198 200h0M156 175h0M26 370h0M131 276h0M137 38h0M21 407h0M9 391h0M146 71h0M184 177h0M203 176h0M110 232h0M130 108h0M34 227h0M26 461h0M109 252h0M126 256h0M159 334h0M216 56h0M90 442h0M49 300h0M109 146h0M184 80h0M70 117h0M137 73h0M60 231h0M213 398h0M212 36h0M18 64h0M95 397h0M164 95h0M73 287h0M170 296h0M135 283h0M116 91h0M96 217h0M17 76h0M186 168h0M23 52h0M147 240h0M199 101h0M23 150h0M90 263h0M157 375h0M3 210h0M79 99h0M34 321h0M67 456h0M66 347h0M110 230h0M155 383h0M116 340h0M189 216h0M201 207h0M108 92h0M33 62h0M188 253h0M118 374h0M11 452h0M182 338h0M218 157h0M120 41h0M194 45h0M50 319h0M211 190h0M190 299h0M25 175h0M188 240h0M103 338h0M7 419h0M118 106h0M128 457h0M18 407h0M133 64h0M191 192h0M151 228h0M134 250h0M201 114h0M150 440h0" stroke-width="1"/>
<path d="M71 211h0M32 149h0M72 91h0M206 46h0M125 115h0M30 418h0M205 417h0M15 351h0M15 352h0M15 351h0M89 178h0M178 18h0M192 301h0M108 229h0M108 227h0M164 341h0M164 342h0M35 300h0M34 303h0M176 137h0M80 442h0M79 443h0M9 330h0M17 142h0M201 335h0M150 390h0M156 27h0M157 30h0M68 328h0M62 291h0M29 367h0M53 397h0M42 350h0M43 350h0M93 65h0M130 63h0M156 208h0M-1 371h0M124 334h0M192 1h0M142 460h0M142 459h0M142 457h0M131 348h0M202 449h0M33 314h0M192 61h0M191 61h0M181 380h0M74 285h0M130 404h0M169 201h0M78 358h0M144 134h0M218 246h0M41 339h0M28 337h0M30 363h0M118 363h0M171 115h0M171 115h0M177 132h0M7 382h0M31 322h0M107 276h0M67 320h0M72 74h0M69 75h0M49 341h0M-1 18h0M218 442h0M95 211h0M204 248h0M225 351h0M226 350h0M227 350h0M187 269h0M91 218h0M80 325h0M122 121h0M123 122h0M65 441h0M67 441h0M15 121h0M9 203h0M103 360h0M48 234h0M106 133h0M107 135h0M129 180h0M214 18h0M28 33h0M28 34h0M37 219h0M62 69h0M62 71h0M32 200h0M64 449h0M64 449h0M121 154h0M34 51h0M32 50h0M66 254h0M217 173h0M41 212h0M29 274h0M29 273h0M96 152h0M48 62h0M4 11h0M104 378h0M46 280h0M192 240h0M192 78h0M208 153h0M47 34h0M-2 17h0M135 190h0M75 86h0M44 324h0M198 230h0M138 131h0M73 67h0M213 18h0M215 20h0M158 278h0M160 280h0M183 203h0M134 213h0M133 211h0M224 459h0M226 459h0M38 101h0M69 254h0M71 18h0M68 346h0M142 97h0M32 80h0M32 80h0M31 79h0M107 6h0M152 153h0M200 1h0M115 179h0M58 460h0M86 447h0M129 126h0M50 394h0M109 213h0M193 347h0M83 312h0M106 447h0M97 428h0M79 364h0M80 363h0M49 425h0M49 423h0M90 64h0M90 63h0M1 107h0M133 208h0M132 208h0M215 86h0M215 86h0M94 185h0M68 226h0M57 288h0M57 155h0M105 56h0M39 35h0M198 225h0M97 348h0M112 289h0M184 176h0M64 299h0M198 90h0M17 319h0M213 48h0M162 368h0M155 376h0M126 143h0M29 363h0M36 287h0M160 170h0M187 430h0M150 186h0M30 410h0M177 216h0M0 138h0M65 324h0M53 49h0M120 243h0M201 171h0M112 263h0M118 316h0M64 379h0M142 141h0M38 319h0M37 4h0M44 302h0M38 195h0M4 120h0M13 364h0M208 227h0M150 78h0M101 412h0M78 307h0M118 228h0M170 258h0M185 275h0M40 330h0M102 73h0M159 259h0M165 84h0M109 423h0M68 343h0M182 354h0M130 134h0M142 108h0M48 122h0M179 290h0M77 407h0M80 186h0M149 380h0M157 288h0M27 175h0M186 192h0M162 174h0M49 350h0M103 174h0M0 263h0M91 106h0M89 450h0M63 62h0M178 436h0M112 252h0M169 420h0M4 441h0M60 124h0M64 152h0M149 120h0M80 420h0M206 171h0M149 65h0M121 354h0M135 407h0M33 344h0M146 7h0M132 375h0M132 134h0M211 74h0M18 342h0M61 253h0M104 334h0M55 120h0M44 351h0M108 176h0M79 187h0M210 3h0M28 446h0M57 182h0M29 259h0M79 268h0M144 306h0M193 166h0M97 269h0M74 296h0M152 211h0M134 165h0M120 189h0M36 43h0M134 192h0M40 125h0M25 345h0M61 285h0M86 279h0M6 355h0M217 317h0M113 35h0M216 48h0M126 154h0M212 362h0M72 426h0M112 331h0M28 357h0M196 186h0M89 390h0M22 145h0M110 27h0M128 455h0M11 218h0M207 79h0M95 334h0M45 409h0M2 438h0M160 10h0M183 177h0M117 117h0M102 232h0M152 122h0M116 414h0M135 146h0M207 11h0M185 37h0M39 178h0M133 418h0M19 25h0M69 85h0M91 211h0M121 223h0M86 290h0M84 350h0M65 193h0M48 442h0M99 146h0M187 317h0M30 111h0M49 93h0M90 25h0M216 436h0M158 82h0M8 459h0M11 382h0M37 408h0M92 311h0M73 44h0M28 198h0M118 228h0M50 19h0M76 305h0M147 456h0M38 81h0M84 376h0M105 253h0M125 293h0M101 200h0M148 23h0M195 35h0M128 234h0M190 445h0M153 101h0M132 254h0M118 294h0M201 131h0M20 143h0M101 199h0M91 94h0M204 429h0M74 427h0M43 97h0M75 225h0M36 331h0M196 139h0M86 110h0M108 98h0M76 34h0M83 179h0M80 41h0M90 123h0M220 19h0M212 16h0M78 401h0M112 372h0M121 162h0M105 240h0M91 74h0M38 166h0M65 287h0M222 45h0M165 388h0M173 60h0M213 420h0M94 348h0M46 27h0M52 264h0M46 15h0M204 123h0M91 254h0M140 78h0M124 194h0M192 50h0M100 196h0M56 295h0M105 301h0M182 408h0M176 261h0M179 310h0M124 56h0M207 215h0M195 218h0M53 108h0M181 248h0M88 182h0M49 201h0M115 259h0M182 184h0M100 266h0M10 177h0M149 242h0M7 246h0M205 73h0M162 449h0M141 322h0M185 17h0M142 346h0M134 303h0M10 224h0M72 247h0M201 112h0M112 104h0M30 420h0M44 69h0M43 439h0M100 329h0M60 146h0M175 412h0M78 344h0M145 202h0M154 231h0M137 114h0M121 29h0M17 228h0M30 344h0M167 11h0M135 115h0M113 220h0M4 33h0M105 420h0M123 411h0M183 40h0M23 362h0M16 234h0M205 376h0M194 260h0M66 11h0M196 139h0M220 248h0M20 243h0M79 284h0M22 372h0M103 341h0M25 30h0M213 369h0M172 275h0M128 245h0M46 63h0M68 103h0M65 300h0M90 194h0M166 180h0M182 189h0M204 249h0M215 170h0M123 408h0M59 229h0M212 401h0M11 420h0M221 25h0M177 381h0M155 441h0M67 152h0M144 94h0M180 439h0M211 368h0M214 100h0M129 315h0M183 411h0M52 451h0M52 366h0M44 331h0M144 386h0M159 238h0M49 176h0M78 116h0M37 94h0M124 72h0M173 269h0M62 277h0M75 248h0M26 247h0M28 57h0M143 395h0M209 4h0M221 385h0M148 213h0M29 355h0M78 343h0M51 356h0M168 167h0M172 361h0M165 142h0M44 209h0M19 355h0M194 169h0M46 188h0M162 106h0M89 118h0M172 133h0M171 17h0M61 117h0M44 422h0M71 143h0M92 399h0M12 24h0M34 163h0M216 125h0M48 206h0M147 79h0M1 185h0M5 180h0M80 435h0M211 199h0M151 106h0M134 124h0M143 223h0M19 238h0M3 222h0M1 350h0M130 14h0M193 359h0M137 153h0M214 121h0M163 418h0M158 457h0M37 179h0M141 404h0M69 377h0M73 96h0M98 337h0M127 445h0M104 174h0M139 429h0M91 259h0M132 250h0M160 368h0M10 358h0M73 116h0M92 21h0M188 285h0M64 275h0M43 239h0M214 197h0M201 399h0M22 93h0M169 166h0M123 438h0M182 347h0M162 451h0M142 166h0M207 455h0M4 428h0M192 89h0M89 176h0M216 258h0M26 364h0M16 279h0M172 159h0M87 293h0M80 414h0M29 17h0M156 257h0M9 452h0M175 142h0M167 225h0M171 56h0M14 244h0M174 261h0M7 18h0M111 45h0M173 214h0M19 185h0M181 387h0M93 215h0M61 263h0M87 91h0M82 382h0M206 226h0M9 229h0M85 309h0M56 248h0M216 150h0M52 135h0M89 444h0M219 458h0M199 88h0M181 357h0M162 402h0M111 152h0M181 384h0M33 243h0M177 408h0M166 326h0M204 273h0M216 268h0M215 211h0M58 180h0M117 137h0M76 368h0M141 369h0M78 308h0M50 343h0M116 182h0M66 38h0M204 401h0M146 356h0M209 384h0M124 390h0M25 71h0M215 207h0M105 275h0M145 243h0M103 378h0M168 461h0M192 231h0M25 13h0M165 446h0M75 167h0M115 266h0M13 1h0M105 81h0M190 30h0M33 304h0M210 23h0M2 351h0M30 81h0M102 45h0M46 164h0M23 370h0M53 305h0M88 333h0M180 119h0M2 441h0M135 249h0M44 226h0M38 140h0M38 77h0M82 179h0M113 246h0M121 255h0M110 11h0M181 295h0M93 328h0M113 304h0M93 158h0M26 80h0M150 306h0M187 51h0M139 433h0M59 35h0M96 376h0M185 33h0M202 342h0M128 38h0M159 410h0M178 2h0M57 56h0M85 298h0M139 387h0M172 164h0M37 397h0M162 18h0M68 82h0M148 27h0M101 374h0M23 137h0M55 229h0M104 227h0M178 7h0M112 255h0M123 18h0M204 208h0M198 429h0M64 370h0M217 169h0M88 121h0M219 379h0M26 138h0M145 32h0M221 108h0M42 134h0M135 76h0M65 428h0M209 421h0M158 145h0M212 360h0M115 326h0M163 287h0M199 313h0M209 159h0M65 147h0M151 259h0M10 126h0M45 281h0M45 225h0M162 284h0M94 245h0M115 140h0M35 407h0M187 460h0M46 346h0M43 420h0M217 362h0M209 445h0M188 375h0M213 89h0M156 7h0M5 70h0M113 191h0M100 313h0M40 208h0M26 455h0M29 289h0M113 402h0M189 255h0M96 56h0M41 179h0M176 17h0M131 282h0M32 423h0M50 124h0M16 156h0M217 22h0M187 296h0M219 372h0M11 8h0M188 41h0M171 400h0M60 199h0M89 377h0M85 326h0M135 418h0M5 398h0M185 24h0M221 24h0M30 266h0M125 139h0M34 242h0M115 415h0M196 288h0M201 15h0M173 8h0M44 118h0M135 362h0M57 144h0M85 269h0M212 115h0M151 418h0M106 198h0M136 259h0M1 12h0M80 396h0M108 459h0M216 50h0M13 373h0M4 444h0M130 337h0M99 32h0M73 355h0M80 30h0M218 440h0M31 218h0M36 115h0M43 210h0M121 304h0M172 386h0M53 152h0M176 123h0M200 251h0M9 384h0M32 183h0M115 57h0M107 354h0M28 153h0M104 459h0M130 318h0M21 100h0M144 325h0M169 217h0M87 101h0M11 103h0M220 221h0M90 211h0M128 379h0M196 325h0M57 91h0M133 416h0M156 365h0M98 164h0M93 410h0M157 260h0M59 262h0M131 334h0M132 57h0M10 363h0M51 147h0M115 386h0M111 227h0M127 229h0M35 325h0M118 280h0M214 347h0M11 452h0M95 318h0M78 434h0M157 384h0M164 100h0M84 445h0M29 81h0M206 244h0M38 453h0M172 127h0M56 24h0M36 153h0M14 346h0M11 27h0M150 335h0M98 51h0M118 78h0M3 82h0M17 429h0M91 367h0M18 332h0M189 215h0M59 66h0M213 402h0M7 430h0M105 144h0M66 220h0M136 186h0M36 104h0M216 400h0M197 268h0M185 329h0M197 260h0M196 437h0M84 169h0M217 322h0M197 358h0M150 304h0M127 305h0M135 186h0M34 232h0M130 260h0M200 46h0M177 171h0M125 375h0M53 425h0M58 58h0M186 311h0M128 344h0M133 342h0M106 419h0M100 156h0M87 370h0M192 222h0M167 374h0M150 3h0M28 436h0M193 322h0M208 360h0M174 427h0M73 29h0M11 371h0M100 458h0M82 129h0M51 93h0M0 276h0M73 289h0M141 92h0M73 277h0M185 198h0M40 176h0M104 76h0M45 35h0M187 254h0M198 127h0M35 262h0M128 424h0M152 213h0M163 267h0M80 174h0M38 143h0M185 156h0M117 197h0M153 206h0M74 19h0M32 400h0M168 100h0M161 375h0M45 129h0M222 60h0M34 54h0M207 420h0M141 353h0M11 103h0M169 423h0M191 409h0M197 287h0M149 53h0M196 137h0M108 149h0M26 153h0M131 184h0M74 285h0M169 357h0M180 414h0M33 457h0M7 422h0M42 398h0M19 127h0M216 82h0M215 232h0M7 231h0M140 109h0M29 121h0M68 138h0M79 9h0M25 281h0M94 365h0M28 60h0M82 378h0M154 321h0M129 187h0M114 71h0M204 303h0M97 91h0M137 14h0M50 178h0M80 153h0M182 259h0M109 436h0M213 374h0M204 435h0M43 381h0M40 428h0M159 285h0M104 383h0M68 76h0M136 461h0M90 27h0M56 133h0M31 417h0M35 93h0M34 192h0M12 83h0M200 3h0M201 41h0M137 99h0M59 54h0M2 299h0M210 312h0M10 459h0M46 237h0M158 125h0M38 47h0M114 224h0M177 111h0M98 154h0M18 65h0M11 402h0M153 48h0M148 299h0M169 175h0M145 319h0M33 163h0M107 448h0M7 43h0M77 80h0M170 72h0M185 389h0M221 226h0M38 240h0M62 11h0M16 338h0M27 192h0M173 353h0M108 60h0M71 237h0M132 149h0M58 352h0M170 452h0M47 178h0M169 239h0M101 195h0M214 245h0M177 351h0M135 198h0M4 433h0M69 413h0M139 389h0M171 224h0M186 181h0M144 441h0M92 38h0M36 141h0M34 189h0M43 346h0M24 208h0M218 388h0M107 406h0M219 255h0M106 159h0M77 243h0M111 3h0M52 142h0M216 220h0M217 163h0M146 256h0M88 195h0M121 51h0M215 221h0M95 42h0M56 396h0M81 437h0M35 80h0M116 282h0M86 71h0M210 413h0M121 36h0M139 192h0M183 368h0M82 5h0M195 191h0M122 377h0M209 409h0M216 141h0M178 263h0M72 414h0M123 262h0M132 295h0M46 68h0M120 60h0M202 298h0M188 257h0M44 99h0M114 372h0M218 341h0M217 272h0M11 249h0M196 275h0M149 147h0M66 276h0M75 0h0M14 358h0M168 353h0M42 66h0M58 20h0M94 327h0M30 388h0M92 124h0M91 368h0M71 156h0M143 177h0M130 380h0M177 98h0M71 211h0M70 2h0M212 402h0M208 277h0M107 254h0M73 391h0M222 224h0M129 242h0M175 175h0M135 445h0M177 302h0M95 270h0M112 190h0M43 377h0M72 124h0M63 112h0M85 305h0M183 107h0M83 100h0M194 379h0M132 203h0M143 186h0M105 160h0M46 324h0M53 222h0M41 435h0M79 200h0M89 115h0M106 290h0M215 271h0M180 0h0M108 79h0M141 124h0M122 212h0M1 325h0M167 341h0M139 402h0M172 360h0M55 51h0M174 375h0M52 337h0M143 248h0M183 8h0M171 29h0M34 326h0M4 119h0M150 366h0M169 454h0M105 213h0M118 147h0M34 105h0M97 171h0M105 323h0M143 246h0M134 270h0M172 358h0M147 230h0M120 291h0M195 136h0M58 250h0M61 218h0M78 64h0M21 99h0M213 376h0M84 137h0M105 381h0M34 296h0M119 120h0M128 392h0M148 270h0M101 270h0M100 256h0M177 453h0M174 173h0M156 121h0M169 53h0M213 144h0M46 400h0M197 363h0M99 259h0M113 371h0M147 13h0M187 377h0M80 46h0M153 291h0M6 24h0M28 347h0M159 422h0M34 308h0M42 239h0M43 255h0M122 155h0M204 43h0M37 347h0M0 356h0M62 358h0M136 266h0M81 423h0M111 380h0M75 221h0M200 408h0M78 351h0M140 257h0M120 183h0M209 116h0M120 404h0M193 145h0M11 165h0M34 416h0M138 355h0M66 102h0M200 12h0M74 1h0M31 424h0M84 151h0M56 286h0M49 144h0M138 245h0M37 366h0M111 245h0M211 59h0M93 211h0M107 121h0M63 352h0M56 246h0M16 449h0M129 451h0M139 317h0M45 399h0M92 9h0M22 160h0M70 323h0M21 8h0M103 257h0M171 98h0M30 197h0M160 453h0M137 117h0M94 195h0M142 337h0M3 282h0M107 300h0M148 229h0M159 153h0M75 288h0M216 406h0M142 206h0M53 37h0M15 403h0M204 384h0M200 134h0M63 283h0M47 345h0M92 288h0M133 454h0M72 299h0M56 182h0M71 56h0M175 385h0M199 378h0M17 317h0M144 28h0M24 334h0M178 429h0M24 42h0M205 258h0M72 230h0M34 150h0M89 73h0M199 25h0M122 375h0M135 315h0M139 102h0M47 221h0M194 121h0M109 153h0M134 125h0M156 428h0M156 19h0M93 249h0M86 433h0M220 43h0M42 169h0M113 129h0M36 445h0M18 392h0M59 271h0M183 151h0M220 17h0M38 42h0M42 422h0M162 83h0M47 422h0M211 261h0M9 23h0M145 32h0M133 257h0M156 451h0M46 6h0M15 153h0M26 324h0M157 51h0M199 228h0M124 34h0M36 185h0M202 111h0M73 66h0M92 163h0M67 215h0M49 182h0M65 153h0M201 178h0M72 367h0M72 320h0M98 93h0M165 449h0M65 340h0M158 92h0M209 252h0M82 256h0M45 268h0M74 126h0M125 211h0M135 307h0M135 97h0M13 447h0M118 97h0M142 71h0M82 130h0M4 319h0M198 216h0M47 19h0M38 372h0M66 426h0M186 203h0M39 131h0M169 396h0M201 416h0M100 296h0M88 434h0M161 160h0M41 68h0M7 354h0M57 426h0M172 231h0M141 4h0M30 140h0M134 50h0M213 363h0M131 175h0M126 179h0M23 416h0M38 172h0M161 4h0M5 393h0M83 81h0M181 373h0M14 427h0M188 33h0M134 207h0M114 357h0M130 347h0M186 253h0M116 425h0M183 144h0M191 1h0M118 86h0M167 415h0M60 212h0M99 459h0M193 241h0M37 427h0M175 341h0M164 171h0M75 386h0M122 32h0M96 351h0M166 216h0M39 45h0M157 333h0M92 334h0M185 333h0M101 406h0M110 227h0M205 43h0M171 74h0M161 211h0M156 10h0M162 156h0M98 416h0M199 173h0M155 213h0M63 428h0M102 307h0M8 77h0M173 107h0M0 411h0M39 290h0M59 449h0M86 212h0M211 105h0M157 429h0M145 71h0M1 439h0M202 76h0M169 413h0M51 359h0M221 134h0M41 407h0M151 116h0M31 310h0M214 174h0M194 56h0M172 119h0M155 190h0M8 42h0M199 172h0M46 408h0M122 165h0M179 127h0M78 203h0M103 179h0M91 217h0M68 207h0M21 60h0M218 299h0M55 34h0M58 424h0M159 428h0M86 151h0M17 93h0M139 453h0M125 188h0M195 273h0M57 286h0M108 31h0M135 140h0M19 270h0M85 91h0M149 371h0M114 30h0M192 116h0M151 151h0M147 35h0M169 273h0M173 336h0M67 380h0M103 256h0M71 74h0M131 86h0M38 133h0M49 342h0M177 26h0M174 415h0M74 259h0M125 90h0M29 45h0M202 81h0M205 349h0M68 180h0M97 246h0M38 6h0M4 15h0M191 247h0M105 116h0M186 133h0M152 434h0M123 316h0M115 292h0M108 415h0M19 69h0M153 342h0M205 381h0M91 38h0M57 237h0M135 412h0M205 76h0M110 84h0M125 240h0M163 110h0M71 3h0M168 443h0M204 316h0M167 388h0M3 38h0M141 266h0M106 77h0M129 414h0M30 343h0M15 334h0M116 297h0M140 33h0M188 262h0M177 158h0M189 311h0M95 452h0M61 40h0M202 63h0M104 433h0M31 126h0M159 300h0M51 317h0M152 413h0M108 422h0M208 33h0M104 353h0M175 388h0M163 166h0M186 364h0M44 96h0M167 265h0M105 413h0M81 13h0M209 143h0M11 419h0M207 164h0M136 67h0M141 135h0M114 61h0M171 203h0M145 18h0M26 112h0M76 336h0M24 120h0M182 113h0M213 310h0M90 257h0M167 242h0M28 442h0M51 140h0M203 287h0M24 6h0M62 380h0M188 358h0M81 228h0M150 336h0M115 299h0M2 333h0M28 42h0M202 194h0M114 226h0M2 110h0M170 373h0M99 33h0M75 101h0M25 153h0M11 325h0M201 250h0M1 359h0M130 74h0M56 32h0M173 17h0M213 423h0M68 182h0M9 407h0M157 72h0M78 224h0M63 355h0M184 145h0M189 195h0M108 166h0M158 418h0M12 282h0M172 237h0M37 380h0M91 320h0M85 420h0M216 259h0M201 21h0M188 264h0M145 46h0M92 105h0M14 11h0M118 418h0M171 111h0M113 25h0M209 367h0M133 7h0M11 194h0M164 268h0M185 295h0M1 262h0M84 191h0M217 183h0M105 338h0M217 252h0M101 279h0M201 27h0M134 251h0M193 66h0M15 252h0M185 333h0M54 62h0M145 23h0M111 91h0M193 121h0M65 339h0M183 302h0M108 44h0M120 41h0M160 356h0M117 10h0M13 307h0M112 414h0M110 379h0M85 18h0M111 348h0M150 281h0M89 390h0M77 45h0M75 45h0M107 282h0M57 71h0M3 371h0M218 41h0M43 27h0M89 11h0M40 47h0M30 400h0M2 315h0M106 197h0M172 341h0M72 81h0M183 298h0M51 172h0M191 431h0M213 15h0M85 187h0M35 87h0M139 409h0M183 446h0M137 288h0M54 248h0M207 56h0M171 121h0M133 325h0M41 332h0M57 184h0M96 60h0M47 171h0M37 68h0M111 63h0M211 208h0M127 135h0M66 334h0M103 424h0M75 97h0M14 404h0M13 339h0M116 157h0M83 226h0M108 60h0M115 220h0M115 389h0M40 90h0M140 307h0M198 379h0M209 425h0M183 449h0M1 145h0M23 191h0M85 329h0M36 136h0M129 370h0M208 353h0M39 399h0M26 291h0M156 259h0M161 434h0M198 443h0M96 307h0M197 107h0M126 270h0M110 321h0M41 208h0M110 30h0M202 219h0M190 49h0M97 226h0M216 152h0M133 312h0M109 106h0M193 44h0M192 372h0M186 240h0M112 271h0M184 154h0M78 410h0M171 65h0M104 155h0M109 345h0M155 213h0M122 433h0M118 219h0M6 14h0M188 172h0M110 11h0M205 412h0M53 150h0M218 209h0M192 50h0M212 313h0M191 203h0M26 127h0M122 313h0M53 66h0M45 292h0M105 57h0M71 363h0M71 461h0M32 55h0M81 322h0M78 49h0M152 200h0M220 203h0M133 408h0M189 62h0M13 3h0M168 432h0M167 434h0M160 233h0M83 152h0M99 180h0M57 126h0M153 184h0M202 156h0M8 239h0M99 249h0M63 19h0M12 79h0M211 377h0M193 323h0M53 228h0M99 203h0M72 278h0M204 317h0M9 274h0M147 446h0M214 422h0M78 454h0M32 85h0M48 148h0M0 121h0M135 422h0M101 84h0M57 83h0M160 180h0M201 104h0M69 71h0M188 103h0M62 163h0M152 431h0M36 334h0M15 138h0M11 403h0M145 146h0M155 305h0M10 444h0M18 76h0M133 1h0M195 381h0M3 209h0M22 326h0M13 140h0M186 225h0M128 100h0M147 155h0M112 26h0M103 299h0M99 27h0M46 250h0M110 44h0M134 235h0M39 402h0M198 156h0M131 135h0M213 384h0M139 198h0M188 307h0M86 52h0M193 79h0M101 171h0M175 88h0M84 276h0M31 176h0M178 414h0M151 167h0M116 126h0M96 252h0M159 192h0M146 127h0M117 124h0M81 231h0M88 201h0M130 135h0M102 88h0M61 432h0M75 444h0M90 419h0M0 119h0M167 281h0M68 369h0M71 316h0M181 329h0M46 309h0M56 28h0M10 307h0M167 28h0M216 446h0M9 2h0M199 303h0M107 429h0M72 322h0M146 129h0M36 50h0M76 297h0M84 180h0M62 85h0M214 420h0M59 120h0M220 22h0M210 405h0M45 256h0M27 334h0M72 458h0M94 215h0M154 21h0M15 213h0M78 235h0M161 158h0M125 97h0M29 328h0M112 447h0M79 364h0M199 177h0M142 23h0M162 352h0M25 375h0M80 78h0M82 113h0M135 456h0M15 29h0M203 433h0M171 270h0M68 453h0M27 316h0M111 38h0M28 437h0M138 387h0M59 368h0M44 294h0M18 243h0M114 194h0M18 139h0M192 447h0M148 117h0M59 189h0M148 155h0M140 105h0M42 234h0M40 260h0M126 47h0M218 164h0M119 175h0M145 159h0M134 18h0M179 277h0M13 227h0M10 162h0M46 421h0M134 176h0M184 109h0M55 169h0M100 225h0M171 336h0M86 130h0M61 426h0M150 130h0M170 230h0M79 400h0M89 329h0M192 110h0M39 290h0M31 155h0M55 76h0M142 105h0M158 54h0M163 61h0M52 13h0M24 178h0M211 129h0M110 402h0M52 140h0M150 85h0M4 301h0M27 412h0M112 34h0M4 30h0M156 378h0M119 440h0M117 242h0M138 298h0M46 377h0M80 408h0M184 445h0M175 149h0M152 253h0M117 93h0M220 152h0M127 168h0M86 148h0M49 168h0M9 7h0M91 202h0M187 391h0M59 194h0M21 224h0M218 314h0M118 258h0M155 58h0M173 310h0M56 347h0M138 340h0M68 432h0M208 306h0M184 215h0M43 100h0M207 399h0M9 392h0M120 228h0M6 111h0M37 374h0M111 345h0M217 121h0M60 73h0M187 243h0M211 293h0M77 53h0M1 275h0M167 20h0M33 260h0M179 352h0M67 168h0M119 364h0M22 158h0M68 237h0M167 446h0M128 357h0M9 291h0M66 167h0M207 112h0M107 13h0M199 180h0M217 300h0M200 402h0M105 181h0M204 274h0M110 255h0M14 18h0M174 246h0M192 32h0M26 406h0M128 254h0M66 313h0M116 205h0M210 15h0M151 75h0M207 364h0M74 218h0M5 416h0M116 25h0M84 382h0M89 184h0M50 24h0M122 177h0M144 213h0M52 259h0M5 203h0M120 158h0M77 288h0M173 399h0M10 180h0M129 414h0M179 19h0M164 123h0M177 191h0M157 66h0M61 287h0M29 243h0M5 228h0M194 92h0M182 364h0M109 346h0M126 214h0M123 310h0M138 457h0M105 178h0M123 40h0M54 273h0M54 447h0M62 401h0M134 310h0M13 202h0M126 73h0M74 405h0M7 258h0M17 451h0M139 425h0M103 127h0M203 313h0M165 308h0M27 288h0" stroke-width="2"/>
<path d="M72 211h0M70 212h0M72 17h0M72 16h0M217 16h0M31 148h0M32 148h0M-1 228h0M39 173h0M180 117h0M64 146h0M65 145h0M21 444h0M12 378h0M11 377h0M11 375h0M207 47h0M206 48h0M209 72h0M104 286h0M30 88h0M219 377h0M31 420h0M28 418h0M83 421h0M82 418h0M81 420h0M37 41h0M204 417h0M145 109h0M93 79h0M73 303h0M45 166h0M142 343h0M144 341h0M222 389h0M121 146h0M119 146h0M40 188h0M39 190h0M90 179h0M90 180h0M202 120h0M65 217h0M177 19h0M179 17h0M190 300h0M191 301h0M65 163h0M109 229h0M209 275h0M208 276h0M222 204h0M221 406h0M74 86h0M221 -1h0M177 240h0M71 306h0M164 342h0M34 299h0M197 134h0M197 135h0M81 444h0M225 107h0M139 368h0M157 232h0M21 178h0M21 177h0M44 246h0M215 338h0M16 140h0M167 172h0M167 172h0M167 171h0M184 214h0M57 262h0M56 263h0M55 264h0M33 249h0M201 335h0M35 193h0M37 192h0M37 194h0M60 43h0M102 -3h0M101 -3h0M157 29h0M21 388h0M72 172h0M70 171h0M41 438h0M43 436h0M41 438h0M154 328h0M154 330h0M147 410h0M40 33h0M219 160h0M150 454h0M149 453h0M215 98h0M70 327h0M69 326h0M77 131h0M77 132h0M5 439h0M40 362h0M43 361h0M114 65h0M162 270h0M162 269h0M54 318h0M10 217h0M107 3h0M162 437h0M163 437h0M157 423h0M59 128h0M166 49h0M166 49h0M187 344h0M186 345h0M207 386h0M206 386h0M8 367h0M85 183h0M106 96h0M98 36h0M97 36h0M202 438h0M3 425h0M47 30h0M50 31h0M48 30h0M49 394h0M49 394h0M43 184h0M130 263h0M130 263h0M66 181h0M216 268h0M44 197h0M47 196h0M152 348h0M151 347h0M219 218h0M52 130h0M36 58h0M34 58h0M217 331h0M216 332h0M216 332h0M52 399h0M167 102h0M152 298h0M42 348h0M19 406h0M18 408h0M17 408h0M165 304h0M193 176h0M193 176h0M16 9h0M15 9h0M13 11h0M32 129h0M225 340h0M227 344h0M85 139h0M193 128h0M192 126h0M192 128h0M161 261h0M163 262h0M175 74h0M176 74h0M175 74h0M6 86h0M182 239h0M127 224h0M-4 373h0M1 357h0M3 355h0M118 419h0M117 418h0M210 200h0M25 96h0M23 96h0M157 208h0M157 208h0M96 44h0M-1 437h0M156 111h0M187 352h0M187 355h0M78 116h0M78 114h0M49 94h0M181 386h0M166 21h0M166 22h0M5 226h0M6 228h0M153 286h0M154 287h0M127 22h0M127 22h0M-1 371h0M2 371h0M1 213h0M184 279h0M226 319h0M157 172h0M166 247h0M51 160h0M175 243h0M174 243h0M71 20h0M186 348h0M39 301h0M8 107h0M19 76h0M19 78h0M32 290h0M193 -0h0M193 -0h0M207 166h0M205 165h0M207 165h0M192 397h0M95 164h0M46 438h0M44 191h0M199 94h0M200 96h0M200 96h0M146 141h0M147 143h0M201 449h0M150 57h0M33 315h0M30 315h0M224 193h0M190 62h0M73 286h0M78 10h0M78 13h0M86 375h0M88 376h0M84 213h0M192 187h0M193 188h0M192 188h0M53 100h0M42 437h0M159 11h0M156 11h0M216 333h0M164 450h0M21 262h0M21 263h0M206 258h0M56 374h0M142 425h0M141 423h0M187 338h0M78 243h0M168 201h0M169 201h0M25 318h0M23 317h0M26 318h0M172 3h0M214 386h0M214 386h0M214 386h0M77 358h0M-0 406h0M122 121h0M117 315h0M30 422h0M7 106h0M91 312h0M91 313h0M93 311h0M2 4h0M18 312h0M18 313h0M203 465h0M203 463h0M41 338h0M27 319h0M32 363h0M21 53h0M20 53h0M25 138h0M26 137h0M25 138h0M136 131h0M137 132h0M158 201h0M158 203h0M116 363h0M116 363h0M201 209h0M216 148h0M175 132h0M0 115h0M139 28h0M137 29h0M5 383h0M143 77h0M142 80h0M144 77h0M85 70h0M209 284h0M114 330h0M63 100h0M48 84h0M205 393h0M203 391h0M188 157h0M189 158h0M154 19h0M155 21h0M62 107h0M106 276h0M107 276h0M223 427h0M223 427h0M221 428h0M66 319h0M67 320h0M69 262h0M71 74h0M198 252h0M165 397h0M202 430h0M145 121h0M179 377h0M63 358h0M63 360h0M62 361h0M77 289h0M75 289h0M75 287h0M218 380h0M-2 19h0M157 124h0M130 277h0M108 283h0M109 283h0M221 264h0M132 162h0M132 30h0M133 31h0M35 132h0M43 30h0M187 269h0M111 420h0M112 421h0M178 97h0M182 99h0M143 177h0M226 125h0M225 124h0M178 25h0M4 157h0M12 150h0M13 151h0M20 454h0M81 324h0M220 3h0M67 439h0M178 272h0M74 103h0M73 103h0M70 103h0M96 224h0M193 329h0M76 378h0M76 381h0M16 119h0M13 119h0M17 31h0M105 336h0M106 335h0M175 140h0M172 452h0M122 378h0M136 307h0M143 260h0M181 413h0M81 426h0M16 438h0M207 147h0M103 361h0M191 245h0M191 244h0M182 326h0M181 326h0M131 160h0M4 108h0M5 106h0M31 14h0M33 14h0M49 233h0M49 234h0M122 22h0M210 123h0M1 78h0M106 133h0M221 197h0M220 196h0M159 280h0M159 280h0M79 410h0M81 409h0M92 210h0M93 210h0M25 353h0M171 92h0M205 441h0M205 440h0M109 316h0M29 34h0M183 379h0M-3 286h0M186 115h0M15 97h0M173 433h0M36 220h0M25 454h0M51 301h0M31 361h0M31 360h0M208 60h0M122 57h0M142 332h0M17 405h0M182 156h0M198 155h0M196 156h0M67 366h0M79 301h0M81 301h0M31 -3h0M30 -2h0M147 420h0M103 369h0M122 37h0M33 137h0M115 94h0M217 419h0M146 203h0M146 201h0M210 292h0M122 154h0M144 372h0M24 7h0M25 5h0M142 92h0M220 103h0M159 213h0M160 212h0M147 281h0M148 282h0M152 125h0M114 218h0M114 219h0M116 218h0M150 402h0M212 14h0M211 16h0M33 51h0M67 254h0M71 110h0M41 464h0M41 463h0M139 418h0M183 416h0M206 83h0M192 68h0M133 348h0M29 274h0M122 73h0M11 351h0M9 354h0M93 362h0M169 51h0M214 285h0M13 98h0M88 139h0M151 165h0M152 166h0M202 282h0M10 185h0M11 186h0M33 131h0M33 131h0M184 220h0M81 251h0M218 150h0M216 147h0M195 317h0M117 240h0M3 12h0M180 145h0M182 145h0M105 378h0M106 377h0M152 153h0M46 252h0M45 256h0M115 4h0M146 -6h0M123 273h0M122 273h0M123 246h0M123 244h0M9 245h0M9 247h0M68 70h0M48 422h0M47 422h0M75 67h0M13 76h0M106 238h0M108 240h0M108 237h0M145 429h0M146 430h0M66 454h0M140 100h0M18 304h0M191 77h0M163 124h0M209 153h0M209 154h0M109 454h0M205 20h0M206 21h0M26 229h0M-1 360h0M47 35h0M8 240h0M8 240h0M1 315h0M36 393h0M38 394h0M201 172h0M41 45h0M39 47h0M91 432h0M163 177h0M-1 18h0M-2 17h0M138 70h0M130 122h0M128 123h0M31 311h0M31 312h0M32 310h0M43 376h0M119 132h0M2 263h0M206 192h0M206 191h0M73 86h0M-1 328h0M66 447h0M16 347h0M219 392h0M0 106h0M2 110h0M117 324h0M116 324h0M45 324h0M82 96h0M82 96h0M80 95h0M33 378h0M33 380h0M69 -1h0M70 -3h0M28 32h0M45 3h0M30 0h0M116 392h0M13 126h0M207 15h0M85 1h0M54 80h0M142 245h0M72 69h0M72 68h0M133 128h0M56 218h0M58 220h0M66 240h0M64 240h0M58 369h0M52 253h0M156 344h0M157 345h0M158 346h0M204 432h0M51 268h0M4 78h0M127 310h0M55 86h0M55 85h0M108 293h0M109 292h0M195 95h0M130 255h0M129 255h0M155 95h0M159 278h0M158 280h0M104 366h0M183 205h0M182 202h0M207 271h0M209 272h0M84 198h0M68 100h0M68 99h0M70 101h0M137 311h0M135 312h0M134 310h0M173 222h0M135 212h0M48 336h0M49 334h0M46 333h0M88 178h0M88 177h0M109 12h0M110 11h0M28 89h0M29 89h0M195 272h0M97 205h0M72 70h0M71 69h0M73 69h0M213 454h0M213 456h0M216 212h0M217 213h0M141 156h0M173 457h0M174 456h0M174 457h0M194 305h0M34 293h0M37 291h0M35 100h0M73 434h0M32 299h0M32 299h0M32 300h0M104 323h0M93 324h0M140 197h0M139 196h0M126 243h0M33 396h0M67 94h0M68 94h0M54 164h0M69 17h0M69 347h0M69 346h0M189 93h0M189 92h0M194 193h0M197 192h0M135 329h0M143 97h0M141 95h0M200 114h0M218 197h0M143 203h0M106 7h0M159 258h0M152 153h0M152 152h0M139 301h0M128 80h0M146 129h0M104 291h0M60 460h0M60 460h0M48 398h0M48 398h0M49 398h0M5 136h0M4 137h0M182 23h0M88 447h0M86 448h0M6 315h0M6 314h0M6 314h0M46 56h0M46 56h0M46 56h0M55 427h0M122 210h0M51 395h0M110 212h0M110 213h0M38 287h0M36 286h0M37 286h0M174 146h0M173 148h0M175 146h0M65 26h0M82 267h0M213 423h0M207 197h0M106 97h0M51 99h0M101 420h0M5 192h0M7 190h0M83 311h0M84 309h0M120 121h0M121 122h0M120 121h0M156 350h0M223 288h0M107 447h0M74 316h0M87 138h0M66 200h0M66 200h0M18 69h0M11 373h0M11 373h0M216 325h0M210 299h0M65 15h0M100 428h0M86 94h0M86 93h0M14 384h0M13 383h0M52 196h0M189 176h0M91 390h0M44 279h0M130 25h0M131 25h0M38 101h0M100 362h0M6 185h0M6 184h0M136 108h0M117 269h0M25 363h0M45 91h0M63 69h0M83 438h0M103 310h0M103 311h0M103 310h0M51 425h0M83 73h0M84 75h0M143 49h0M143 50h0M188 168h0M178 207h0M199 150h0M201 149h0M200 150h0M183 134h0M182 135h0M127 110h0M222 457h0M220 458h0M88 377h0M88 377h0M210 241h0M200 107h0M133 5h0M133 4h0M118 228h0M211 151h0M213 339h0M214 341h0M145 -4h0M207 305h0M222 425h0M162 394h0M160 393h0M201 458h0M201 457h0M110 227h0M111 3h0M158 97h0M44 56h0M1 421h0M133 183h0M101 348h0M103 346h0M70 442h0M75 313h0M78 314h0M61 422h0M213 103h0M187 408h0M187 407h0M-1 77h0M-1 76h0M173 165h0M195 72h0M175 112h0M173 168h0M122 159h0M73 354h0M149 349h0M-0 189h0M-0 188h0M51 218h0M126 460h0M106 253h0M65 35h0M44 97h0M23 109h0M36 132h0M20 307h0M207 370h0M191 142h0M83 427h0M10 141h0M178 308h0M133 79h0M213 348h0M99 100h0M103 115h0M115 177h0M109 327h0M111 428h0M131 70h0M70 306h0M80 103h0M85 320h0M35 260h0M171 59h0M156 346h0M124 329h0M126 119h0M3 232h0M146 286h0M114 319h0M182 5h0M116 294h0M183 267h0M108 303h0M46 243h0M205 440h0M103 306h0M177 362h0M32 215h0M221 375h0M10 57h0M162 255h0M7 10h0M86 58h0M107 414h0M159 119h0M113 191h0M155 22h0M196 66h0M200 62h0M193 342h0M75 443h0M124 380h0M219 195h0M100 174h0M171 403h0M66 321h0M214 333h0M38 339h0M184 345h0M197 341h0M145 430h0M110 95h0M138 132h0M139 81h0M18 271h0M176 201h0M20 73h0M164 81h0M117 68h0M152 424h0M8 256h0M81 50h0M2 460h0M160 280h0M94 270h0M17 73h0M210 95h0M42 124h0M2 362h0M48 374h0M119 85h0M157 250h0M136 344h0M215 35h0M65 54h0M122 61h0M215 440h0M200 45h0M13 183h0M48 20h0M207 379h0M211 189h0M38 116h0M5 331h0M212 140h0M94 324h0M181 49h0M69 76h0M27 340h0M29 360h0M94 329h0M158 412h0M141 98h0M168 282h0M93 150h0M79 173h0M100 136h0M149 360h0M152 203h0M131 54h0M123 19h0M200 420h0M156 456h0M37 433h0M121 419h0M145 89h0M109 61h0M155 185h0M81 449h0M176 209h0M76 279h0M112 313h0M121 301h0M174 19h0M198 241h0M38 358h0M54 162h0M129 7h0M53 161h0M2 285h0M109 368h0M192 454h0M209 92h0M145 372h0M210 92h0M99 170h0M86 86h0M130 93h0M171 244h0M128 125h0M80 285h0M153 403h0M123 236h0M147 421h0M43 193h0M99 282h0M108 85h0M19 400h0M188 145h0M79 97h0M34 427h0M119 227h0M29 282h0M190 68h0M37 147h0M220 19h0M78 241h0M103 248h0M134 316h0M169 379h0M189 447h0M204 129h0M103 109h0M221 176h0M5 153h0M129 78h0M68 24h0M202 38h0M139 200h0M22 197h0M44 225h0M98 208h0M149 385h0M86 257h0M171 125h0M116 83h0M99 172h0M39 419h0M221 61h0M106 442h0M34 26h0M11 82h0M123 449h0M114 353h0M171 42h0M19 416h0M76 238h0M138 129h0M147 378h0M157 65h0M104 336h0M22 447h0M112 384h0M101 268h0M18 1h0M28 118h0M60 442h0M59 77h0M156 77h0M39 399h0M77 39h0M204 129h0M107 407h0M74 139h0M49 454h0M177 27h0M159 417h0M185 257h0M56 46h0M77 417h0M177 13h0M156 456h0M109 289h0M20 405h0M16 432h0M186 114h0M57 125h0M139 293h0M77 55h0M219 122h0M32 176h0M11 104h0M167 270h0M20 222h0M201 436h0M62 459h0M210 398h0M122 21h0M145 255h0M10 241h0M75 418h0M134 443h0M29 67h0M81 281h0M194 52h0M203 279h0M140 281h0M159 68h0M40 211h0M71 182h0M4 332h0M180 401h0M107 304h0M87 429h0M29 112h0M168 194h0M33 374h0M188 9h0M60 319h0M50 324h0M193 160h0M17 234h0M24 262h0M157 428h0M155 329h0M66 393h0M33 343h0M53 70h0M65 370h0M21 102h0M87 135h0M27 272h0M165 2h0M36 16h0M33 365h0M129 35h0M19 328h0M150 341h0M41 383h0M49 75h0M97 24h0M30 194h0M28 58h0M137 396h0M140 420h0M2 154h0M200 45h0M160 223h0M197 59h0M113 214h0M162 268h0M107 228h0M153 135h0M159 412h0M183 231h0M94 257h0M35 139h0M83 85h0M56 24h0M103 336h0M156 48h0M4 297h0M32 379h0M86 390h0M184 314h0M101 201h0M21 40h0M101 330h0M133 199h0M131 33h0M148 8h0M180 148h0M64 218h0M132 174h0M41 288h0M101 315h0M155 130h0M87 439h0M21 302h0M106 368h0M150 216h0M177 315h0M154 9h0M159 191h0M219 157h0M138 164h0M7 21h0M5 241h0M16 192h0M104 132h0M113 277h0M183 394h0M110 187h0M32 143h0M87 96h0M206 207h0M102 430h0M179 376h0M29 271h0M25 365h0M14 255h0M73 171h0M50 53h0M165 141h0M204 281h0M89 89h0M221 175h0M95 399h0M192 235h0M174 342h0M42 51h0M74 36h0M177 157h0M222 129h0M111 364h0M25 384h0M15 455h0M155 321h0M180 17h0M214 268h0M19 297h0M132 352h0M72 16h0M101 115h0M172 106h0M121 18h0M118 64h0M130 426h0M58 137h0M95 358h0M79 129h0M141 30h0M131 445h0M13 158h0M130 166h0M134 39h0M54 305h0M139 188h0M48 52h0M58 287h0M21 433h0M222 136h0M160 161h0M70 128h0M184 344h0M79 190h0M103 162h0M206 85h0M169 219h0M47 353h0M149 225h0M2 34h0M43 111h0M146 410h0M42 268h0M183 46h0M140 379h0M211 281h0M209 352h0M10 265h0M86 380h0M51 407h0M32 72h0M195 141h0M79 240h0M31 350h0M95 229h0M122 205h0M41 296h0M210 108h0M54 415h0M105 76h0M28 199h0M77 232h0M222 447h0M98 53h0M144 161h0M57 154h0M205 422h0M177 427h0M38 370h0M151 344h0M41 17h0M51 172h0M37 49h0M155 289h0M176 114h0M40 454h0M5 351h0M17 74h0M216 135h0M52 419h0M206 328h0M57 114h0M63 241h0M123 363h0M133 360h0M200 58h0M122 428h0M103 205h0M74 23h0M35 187h0M6 81h0M185 349h0M163 370h0M121 277h0M119 85h0M205 200h0M212 111h0M105 289h0M94 274h0M148 352h0M103 98h0M163 134h0M197 451h0M115 4h0M200 267h0M41 347h0M190 300h0M93 325h0M189 395h0M196 214h0M195 393h0M58 239h0M39 88h0M29 117h0M43 338h0M158 71h0M34 176h0M11 314h0M28 11h0M33 192h0M162 441h0M157 290h0M13 334h0M26 209h0M49 77h0M131 267h0M87 315h0M142 269h0M10 350h0M48 351h0M199 75h0M80 46h0M102 113h0M68 111h0M126 133h0M76 29h0M122 20h0M125 35h0M175 344h0M71 45h0M216 297h0M154 403h0M93 108h0M207 255h0M139 329h0M169 164h0M23 160h0M113 271h0M83 64h0M104 222h0M47 70h0M59 95h0M148 348h0M151 252h0M58 164h0M13 192h0M27 28h0M197 127h0M141 118h0M139 432h0M140 250h0M93 409h0M221 160h0M175 435h0M124 167h0M1 96h0M82 233h0M78 254h0M32 158h0M169 69h0M164 157h0M196 3h0M19 209h0M94 108h0M208 436h0M136 285h0M145 278h0M6 287h0M140 31h0M68 392h0M216 273h0M25 440h0M59 87h0M168 328h0M200 24h0M38 30h0M205 425h0M73 360h0M157 401h0M190 271h0M99 418h0M18 399h0M132 92h0M124 383h0M62 16h0M200 93h0M216 293h0M197 458h0M182 154h0M21 183h0M58 243h0M117 350h0M166 414h0M148 382h0M190 169h0M149 246h0M65 394h0M30 391h0M88 240h0M193 256h0M59 148h0M188 136h0M45 197h0M160 168h0M200 37h0M203 92h0M54 28h0M192 392h0M86 333h0M146 410h0M105 262h0M198 345h0M200 335h0M8 217h0M128 217h0M94 82h0M165 410h0M107 96h0M187 102h0M40 315h0M195 75h0M110 58h0M55 181h0M77 374h0M62 368h0M212 249h0M173 172h0M16 183h0M142 419h0M164 426h0M216 283h0M6 258h0M4 137h0M120 236h0M84 281h0M124 443h0M18 375h0M21 13h0M200 407h0M65 333h0M34 29h0M96 257h0M54 337h0M198 228h0M35 291h0M122 203h0M197 197h0M143 171h0M218 317h0M135 164h0M129 146h0M74 365h0M200 326h0M110 290h0M220 360h0M131 331h0M132 134h0M111 95h0M8 25h0M9 150h0M150 109h0M17 233h0M199 82h0M22 321h0M51 15h0M56 424h0M187 315h0M182 125h0M93 440h0M113 47h0M151 64h0M138 161h0M42 41h0M66 97h0M164 360h0M12 141h0M169 435h0M63 427h0M98 430h0M4 434h0M98 192h0M15 82h0M164 58h0M59 217h0M69 200h0M22 299h0M158 54h0M102 219h0M128 237h0M214 170h0M62 150h0M205 389h0M180 292h0M6 155h0M177 171h0M159 324h0M4 54h0M193 265h0M176 151h0M83 229h0M146 332h0M125 460h0M76 231h0M4 286h0M176 386h0M183 371h0M99 293h0M168 29h0M10 82h0M73 192h0M124 180h0M222 109h0M84 294h0M54 448h0M55 204h0M146 329h0M23 267h0M82 250h0M197 132h0M179 91h0M160 212h0M176 209h0M70 226h0M36 261h0M109 69h0M193 374h0M100 122h0M34 33h0M120 273h0M79 187h0M84 337h0M57 253h0M120 33h0M88 454h0M220 46h0M175 327h0M127 158h0M61 281h0M191 148h0M99 325h0M103 341h0M86 439h0M214 311h0M213 53h0M144 109h0M221 28h0M17 285h0M88 70h0M77 317h0M65 84h0M179 303h0M195 309h0M165 401h0M179 204h0M137 137h0M30 12h0M157 453h0M90 232h0M139 460h0M25 169h0M38 247h0M118 270h0M122 84h0M140 448h0M95 265h0M111 316h0M125 286h0M37 136h0M115 272h0M153 211h0M186 91h0M24 419h0M175 285h0M185 92h0M181 264h0M23 165h0M82 75h0M204 110h0M79 11h0M31 73h0M1 331h0M168 208h0M208 193h0M184 106h0M118 97h0M27 93h0M121 67h0M107 253h0M76 375h0M103 250h0M104 328h0M24 192h0M135 122h0M216 269h0M195 13h0M221 302h0M181 18h0M9 183h0M106 335h0M143 136h0M19 9h0M151 355h0M172 14h0M151 190h0M12 100h0M145 217h0M206 104h0M95 21h0M83 132h0M70 187h0M191 340h0M24 350h0M84 151h0M89 227h0M202 210h0M126 292h0M124 409h0M101 45h0M6 181h0M28 307h0M211 168h0M115 276h0M217 373h0M82 74h0M11 426h0M112 175h0M128 203h0M108 44h0M23 198h0M158 315h0M26 288h0M178 75h0M27 285h0M150 11h0M111 10h0M111 10h0M193 56h0M11 210h0M103 162h0M98 94h0M149 455h0M117 356h0M15 99h0M196 281h0M128 26h0M212 181h0M111 203h0M80 344h0M17 170h0M41 162h0M67 113h0M221 396h0M176 336h0M109 346h0M139 355h0M57 198h0M84 447h0M139 168h0M27 139h0M19 255h0M217 311h0M59 60h0M43 362h0M128 376h0M203 100h0M210 437h0M136 236h0M128 271h0M165 207h0M175 154h0M19 101h0M213 340h0M156 119h0M129 256h0M126 112h0M189 395h0M44 406h0M80 413h0M167 84h0M120 277h0M7 264h0M145 291h0M100 18h0M168 103h0M113 385h0M207 12h0M24 41h0M119 353h0M44 183h0M60 114h0M92 372h0M98 219h0M20 35h0M169 288h0M11 256h0M194 178h0M35 391h0M166 427h0M170 291h0M143 423h0M29 163h0M194 59h0M49 455h0M100 60h0M56 28h0M171 228h0M196 462h0M148 315h0M206 357h0M113 56h0M11 377h0M58 119h0M79 77h0M132 253h0M93 451h0M52 131h0M202 353h0M146 219h0M170 450h0M125 87h0M211 229h0M33 180h0M102 461h0M105 332h0M53 404h0M184 418h0M52 81h0M73 212h0M196 461h0M185 59h0M55 84h0M217 245h0M10 123h0M174 306h0M99 219h0M181 212h0M34 359h0M193 291h0M65 311h0M188 127h0M100 396h0M0 331h0M217 29h0M106 212h0M6 425h0M109 31h0M222 335h0M220 449h0M173 30h0M17 147h0M128 276h0M206 375h0M172 280h0M70 444h0M200 341h0M22 330h0M148 165h0M186 348h0M55 261h0M106 141h0M82 391h0M143 367h0M210 12h0M48 1h0M43 107h0M98 158h0M213 277h0M73 102h0M2 353h0M44 56h0M50 183h0M20 35h0M218 318h0M30 422h0M119 194h0M125 92h0M95 443h0M70 324h0M147 385h0M111 207h0M212 416h0M161 199h0M2 222h0M71 231h0M98 254h0M22 289h0M151 66h0M136 240h0M70 326h0M153 392h0M117 319h0M128 19h0M169 78h0M19 30h0M165 331h0M81 231h0M215 26h0M28 109h0M222 330h0M179 253h0M64 386h0M49 341h0M210 78h0M91 349h0M38 172h0M73 140h0M187 381h0M95 149h0M74 6h0M153 390h0M108 327h0M68 355h0M24 164h0M50 363h0M32 270h0M16 139h0M44 172h0M192 111h0M127 312h0M136 439h0M117 290h0M210 125h0M5 169h0M89 51h0M200 11h0M163 116h0M114 347h0M54 200h0M27 351h0M173 195h0M94 9h0M160 371h0M127 209h0M127 41h0M98 163h0M165 330h0M192 65h0M47 284h0M209 201h0M89 245h0M139 12h0M199 263h0M163 63h0M133 78h0M133 444h0M15 315h0M144 81h0M32 350h0M212 206h0M113 90h0M16 119h0M18 319h0M146 85h0M12 212h0M210 431h0M204 262h0M68 442h0M195 117h0M98 68h0M43 298h0M18 15h0M48 72h0M129 151h0M80 284h0M2 403h0M172 90h0M58 20h0M161 205h0M30 370h0M170 318h0M50 112h0M46 354h0M196 308h0M122 53h0M65 355h0M103 219h0M130 109h0M61 279h0M182 298h0M4 415h0M97 384h0M200 455h0M35 293h0M84 304h0M121 441h0M204 183h0M76 450h0M15 311h0M213 245h0M200 98h0M69 18h0M79 260h0M52 180h0M147 386h0M133 272h0M0 123h0M193 45h0M216 391h0M31 200h0M42 444h0M42 156h0M100 425h0M83 200h0M201 39h0M22 417h0M137 347h0M152 51h0M197 224h0M85 398h0M64 195h0M151 153h0M38 2h0M11 11h0M74 404h0M180 88h0M173 85h0M102 147h0M75 184h0M124 3h0M109 435h0M205 136h0M104 219h0M118 195h0M158 405h0M111 422h0M77 324h0M103 301h0M108 299h0M163 134h0M50 150h0M35 183h0M67 126h0M141 125h0M16 304h0M172 166h0M18 426h0M38 403h0M168 415h0M195 287h0M150 103h0M36 443h0M16 275h0M77 107h0M133 14h0M40 368h0M199 197h0M87 57h0M159 257h0M167 441h0M141 125h0M23 240h0M42 424h0M176 268h0M88 34h0M222 188h0M115 424h0M88 2h0M178 194h0M194 437h0M68 360h0M137 350h0M210 109h0M40 16h0M131 243h0M179 444h0M161 335h0M180 109h0M110 451h0M142 125h0M47 86h0M82 437h0M50 195h0M75 308h0M180 344h0M200 386h0M93 57h0M122 316h0M183 412h0M66 308h0M154 110h0M32 387h0M31 78h0M178 458h0M1 211h0M169 434h0M1 37h0M54 277h0M115 447h0M218 403h0M174 316h0M141 91h0M8 15h0M140 380h0M198 420h0M130 68h0M165 296h0M93 376h0M220 118h0M186 10h0M70 246h0M84 310h0M58 428h0M66 285h0M177 116h0M56 338h0M117 39h0M42 4h0M172 113h0M103 449h0M4 103h0M92 100h0M70 316h0M125 333h0M96 42h0M88 268h0M40 211h0M120 285h0M192 227h0M164 188h0M96 332h0M124 187h0M103 16h0M3 278h0M161 340h0M8 425h0M172 82h0M131 166h0M50 324h0M131 280h0M66 63h0M99 366h0M3 158h0M77 331h0M125 235h0M68 70h0M21 140h0M97 231h0M149 397h0M119 82h0M91 442h0M52 57h0M200 420h0M82 346h0M67 410h0M72 165h0M174 286h0M166 316h0M139 308h0M63 271h0M139 457h0M196 324h0M198 21h0M178 357h0M195 346h0M180 453h0M94 400h0M194 86h0M187 227h0M86 394h0M92 127h0M159 169h0M35 380h0M24 30h0M104 132h0M67 435h0M197 205h0M65 35h0M25 208h0M32 33h0M113 143h0M112 436h0M172 13h0M71 139h0M175 4h0M179 117h0M179 351h0M191 394h0M90 55h0M68 451h0M61 86h0M153 21h0M67 27h0M12 238h0M215 341h0M135 225h0M207 26h0M160 116h0M33 141h0M36 241h0M201 423h0M206 330h0M214 362h0M14 410h0M64 151h0M213 129h0M87 414h0M92 236h0M63 226h0M220 75h0M181 279h0M141 25h0M116 243h0M205 424h0M125 419h0M4 404h0M18 195h0M90 283h0M22 374h0M34 158h0M98 59h0M45 425h0M180 411h0M128 151h0M110 62h0M203 207h0M186 460h0M73 180h0M4 110h0M207 39h0M115 431h0M178 12h0M163 110h0M36 373h0M113 373h0M182 272h0M8 226h0M79 166h0M120 302h0M49 234h0M136 339h0M71 407h0M108 416h0M13 251h0M115 444h0M74 28h0M14 415h0M198 103h0M174 148h0M195 49h0M184 410h0M188 302h0M76 250h0M100 415h0M124 85h0M207 296h0M122 46h0M113 33h0M98 379h0M162 134h0M70 342h0M170 434h0M205 276h0M7 433h0M117 88h0M218 221h0M177 149h0M49 338h0M4 396h0M142 144h0M47 413h0M27 366h0M85 336h0M184 33h0M178 286h0M44 243h0M82 170h0M126 374h0M116 377h0M187 413h0M24 357h0M122 437h0M15 302h0M157 104h0M93 25h0M108 438h0M158 435h0M83 303h0M145 288h0M157 260h0M171 20h0M122 387h0M59 40h0M139 246h0M137 332h0M27 204h0M40 176h0M24 77h0M17 46h0M23 74h0M197 15h0M173 85h0M208 109h0M149 300h0M222 284h0M126 252h0M113 290h0M102 256h0M53 307h0M138 415h0M24 2h0M166 173h0M3 438h0M177 243h0M44 442h0M156 445h0M194 212h0M110 323h0M20 350h0M221 224h0M194 239h0M111 135h0M134 114h0M101 311h0M212 5h0M28 120h0M220 321h0M48 200h0M115 318h0M69 183h0M50 69h0M81 57h0M178 118h0M173 454h0M119 166h0M71 435h0M17 101h0M53 80h0M123 141h0M133 349h0M1 85h0M140 299h0M26 56h0M99 167h0M127 139h0M158 48h0M40 23h0M198 237h0M13 52h0M162 270h0M19 311h0M107 335h0M206 298h0M101 247h0M205 73h0M208 293h0M63 387h0M79 265h0M209 375h0M51 27h0M118 348h0M17 185h0M163 263h0M25 428h0M102 20h0M138 399h0M135 290h0M67 26h0M148 436h0M167 76h0M203 135h0M85 116h0M15 185h0M3 262h0M47 235h0M32 165h0M99 350h0M59 190h0M107 413h0M139 102h0M114 5h0M142 340h0M24 26h0M80 86h0M114 433h0M118 149h0M177 258h0M125 6h0M147 69h0M190 233h0M39 427h0M156 151h0M150 353h0M50 232h0M119 352h0M49 55h0M204 317h0M19 255h0M126 134h0M114 83h0M150 47h0M207 337h0M45 383h0M17 413h0M58 44h0M61 441h0M126 271h0M161 2h0M204 202h0M209 323h0M160 245h0M67 36h0M95 234h0M128 161h0M53 156h0M147 443h0M199 50h0M48 2h0M198 391h0M116 103h0M115 12h0M138 181h0M168 11h0M146 19h0M16 21h0M42 374h0M14 394h0M169 134h0M127 183h0M16 220h0M214 172h0M42 297h0M193 99h0M28 187h0M39 328h0M59 172h0M165 210h0M170 38h0M122 51h0M129 1h0M14 280h0M31 44h0M76 182h0M139 263h0M166 49h0M162 295h0M149 322h0M220 207h0M187 281h0M186 279h0M100 272h0M127 81h0M86 154h0M153 97h0M119 365h0M212 302h0M97 290h0M146 353h0M152 215h0M92 431h0M0 95h0M214 303h0M156 101h0M196 305h0M33 188h0M113 256h0M147 173h0M193 317h0M168 159h0M22 236h0M12 445h0M22 195h0M54 30h0M110 256h0M106 361h0M16 269h0M15 430h0M101 235h0M179 226h0M125 101h0M187 161h0M186 145h0M140 353h0M96 4h0M106 335h0M206 428h0M176 298h0M120 344h0M7 147h0M222 3h0M60 192h0M70 13h0M136 3h0M189 63h0M126 287h0M180 84h0M160 96h0M82 194h0M149 102h0M7 34h0M110 457h0M206 370h0M161 123h0M66 223h0M212 350h0M36 372h0M190 78h0M219 213h0M1 16h0M5 182h0M117 177h0M132 143h0M43 13h0M58 150h0M15 304h0M180 258h0M51 376h0M65 326h0M183 321h0M175 261h0M167 101h0M174 312h0M78 322h0M5 409h0M75 140h0M132 380h0M37 331h0M96 13h0M10 436h0M197 169h0M144 431h0M28 163h0M17 311h0M170 398h0M218 434h0M117 268h0M120 345h0M201 107h0M21 232h0M37 232h0M114 428h0M167 9h0M118 29h0M73 193h0M130 142h0M198 71h0M130 163h0M171 2h0M40 368h0M35 353h0M58 28h0M186 316h0M154 460h0M108 97h0M62 126h0M62 245h0M205 287h0M129 179h0M200 407h0M10 126h0M116 19h0M64 280h0M43 112h0M157 21h0M103 159h0M90 323h0M12 35h0M95 361h0M42 268h0M162 403h0M116 118h0M118 419h0M126 358h0M46 443h0M162 105h0M28 453h0M53 200h0M178 6h0M104 271h0M62 241h0M153 379h0M35 13h0M75 51h0M63 383h0M151 385h0M11 35h0M48 411h0M169 254h0M174 456h0M140 130h0M194 151h0M42 291h0M122 337h0M130 422h0M164 126h0M188 259h0M102 405h0M126 96h0M156 231h0M208 431h0M112 11h0M199 285h0M39 60h0M5 450h0M88 449h0M95 42h0M154 417h0M149 178h0M131 157h0M129 296h0M10 436h0M105 13h0M26 28h0M101 281h0M4 126h0M45 401h0M21 48h0M215 448h0M172 302h0M70 112h0M148 128h0M144 285h0M220 312h0M157 222h0M10 438h0M201 157h0M26 146h0M102 166h0M7 446h0M109 3h0M74 247h0M184 173h0M214 208h0M178 425h0M193 429h0M136 80h0M1 39h0M179 363h0M87 162h0M96 13h0M207 141h0M40 65h0M212 437h0M161 274h0M45 341h0M28 65h0M100 59h0M86 219h0M203 306h0M155 361h0M146 130h0M205 310h0M113 394h0M203 410h0M139 131h0M98 152h0M131 150h0M69 316h0M174 407h0M161 95h0M39 181h0" stroke-width="3"/>
<path d="M54 293h0M138 4h0M-3 229h0M-4 229h0M141 126h0M142 124h0M124 305h0M121 305h0M4 180h0M118 214h0M61 375h0M178 58h0M7 328h0M148 -2h0M146 -4h0M146 -2h0M97 143h0M29 88h0M99 53h0M125 369h0M14 440h0M17 2h0M18 3h0M17 205h0M98 442h0M93 81h0M-3 102h0M73 304h0M126 357h0M128 348h0M130 237h0M198 461h0M184 269h0M182 269h0M27 376h0M27 380h0M47 372h0M165 82h0M190 218h0M150 39h0M87 333h0M201 118h0M204 119h0M66 216h0M66 217h0M134 284h0M194 382h0M194 377h0M104 288h0M104 287h0M215 99h0M2 329h0M43 103h0M143 177h0M190 445h0M194 188h0M142 56h0M141 56h0M141 55h0M69 428h0M101 252h0M220 404h0M73 88h0M221 1h0M177 239h0M178 239h0M69 305h0M69 304h0M67 319h0M137 130h0M136 131h0M-1 161h0M0 160h0M125 25h0M135 279h0M132 364h0M109 87h0M113 461h0M4 158h0M4 158h0M222 106h0M223 106h0M177 222h0M141 364h0M16 142h0M113 196h0M110 197h0M185 214h0M1 117h0M116 456h0M137 424h0M106 24h0M103 -1h0M150 392h0M195 10h0M195 9h0M194 11h0M22 388h0M21 389h0M70 173h0M148 413h0M217 160h0M150 454h0M38 262h0M4 436h0M63 293h0M150 379h0M55 319h0M158 82h0M7 219h0M108 5h0M108 7h0M164 437h0M196 285h0M158 423h0M46 247h0M47 248h0M58 130h0M104 169h0M207 384h0M10 367h0M51 224h0M33 94h0M33 98h0M99 36h0M201 440h0M129 262h0M218 274h0M44 182h0M138 79h0M81 74h0M100 324h0M2 72h0M-1 71h0M1 72h0M131 263h0M186 162h0M192 246h0M192 243h0M107 312h0M45 200h0M181 284h0M212 1h0M150 464h0M148 463h0M147 464h0M149 25h0M49 164h0M34 59h0M142 145h0M152 299h0M67 215h0M69 145h0M141 200h0M138 200h0M29 182h0M29 182h0M208 65h0M208 66h0M208 67h0M144 252h0M178 38h0M199 458h0M202 457h0M30 128h0M134 -4h0M84 140h0M83 140h0M40 157h0M80 358h0M38 24h0M68 154h0M134 321h0M97 306h0M184 23h0M174 284h0M176 285h0M210 197h0M130 347h0M95 32h0M94 35h0M222 36h0M223 36h0M223 35h0M43 14h0M39 14h0M25 98h0M95 42h0M108 287h0M88 149h0M88 151h0M-2 438h0M73 117h0M75 115h0M186 353h0M78 116h0M129 219h0M209 180h0M50 94h0M49 93h0M166 19h0M6 227h0M21 185h0M153 288h0M17 199h0M18 200h0M57 445h0M46 118h0M127 22h0M156 173h0M153 172h0M66 247h0M83 336h0M38 130h0M136 159h0M138 160h0M84 87h0M49 161h0M51 161h0M106 104h0M174 243h0M73 354h0M73 21h0M41 302h0M20 76h0M5 416h0M31 287h0M180 -3h0M18 425h0M96 164h0M46 440h0M147 358h0M149 360h0M16 407h0M43 438h0M49 25h0M181 41h0M224 233h0M226 194h0M197 382h0M196 380h0M197 381h0M190 385h0M73 287h0M77 14h0M44 317h0M184 144h0M96 89h0M202 416h0M1 301h0M54 100h0M53 101h0M192 411h0M190 414h0M56 142h0M40 436h0M163 450h0M185 259h0M159 371h0M33 318h0M21 262h0M201 33h0M140 23h0M204 257h0M206 258h0M99 106h0M215 294h0M184 446h0M183 445h0M77 161h0M126 269h0M159 66h0M184 334h0M184 333h0M60 315h0M173 2h0M160 147h0M197 78h0M193 77h0M-1 407h0M-1 409h0M147 431h0M146 432h0M83 351h0M207 175h0M119 311h0M90 122h0M90 124h0M26 111h0M183 426h0M188 317h0M44 337h0M-0 176h0M20 386h0M22 389h0M105 243h0M125 433h0M2 4h0M3 3h0M-5 334h0M13 241h0M205 343h0M96 208h0M38 237h0M140 383h0M185 426h0M119 13h0M118 15h0M220 66h0M221 65h0M146 294h0M193 295h0M196 -1h0M195 -1h0M171 93h0M102 454h0M8 154h0M193 18h0M171 116h0M64 175h0M62 175h0M203 208h0M175 5h0M215 148h0M138 88h0M138 90h0M137 89h0M186 73h0M124 446h0M36 5h0M208 180h0M206 180h0M-1 115h0M-1 113h0M110 440h0M110 439h0M163 397h0M90 15h0M87 15h0M82 70h0M213 52h0M213 52h0M59 252h0M208 284h0M132 214h0M224 380h0M226 379h0M115 329h0M114 328h0M62 100h0M107 191h0M48 85h0M215 434h0M132 181h0M204 393h0M5 373h0M162 307h0M60 109h0M36 221h0M202 45h0M146 167h0M149 166h0M82 265h0M83 264h0M51 341h0M112 299h0M202 431h0M204 430h0M15 268h0M14 269h0M16 268h0M144 120h0M146 121h0M178 377h0M198 423h0M196 424h0M217 379h0M134 92h0M134 89h0M27 296h0M22 136h0M20 134h0M21 137h0M0 284h0M-2 285h0M176 271h0M218 440h0M159 125h0M158 123h0M3 107h0M109 283h0M219 262h0M35 449h0M134 30h0M167 319h0M168 319h0M37 132h0M67 250h0M112 420h0M181 99h0M101 37h0M223 126h0M182 26h0M168 190h0M136 342h0M131 162h0M214 321h0M157 345h0M219 2h0M175 270h0M73 99h0M190 280h0M40 322h0M18 30h0M93 193h0M91 190h0M91 193h0M105 335h0M123 377h0M183 410h0M124 328h0M126 327h0M130 260h0M131 260h0M204 379h0M128 316h0M173 285h0M164 341h0M171 144h0M87 419h0M87 419h0M206 427h0M41 273h0M186 141h0M111 69h0M132 161h0M123 23h0M123 25h0M149 184h0M150 184h0M141 59h0M142 59h0M119 101h0M118 103h0M122 102h0M184 374h0M110 20h0M219 197h0M157 278h0M169 339h0M28 46h0M25 353h0M138 232h0M222 252h0M92 309h0M185 291h0M170 95h0M55 36h0M207 441h0M5 105h0M2 105h0M133 239h0M111 146h0M22 176h0M15 360h0M90 184h0M147 292h0M147 294h0M97 5h0M103 72h0M170 52h0M170 51h0M109 197h0M110 197h0M111 196h0M183 391h0M34 221h0M27 94h0M26 455h0M53 298h0M52 299h0M122 58h0M8 398h0M9 397h0M196 353h0M143 333h0M146 333h0M16 405h0M25 190h0M101 24h0M106 23h0M182 156h0M182 250h0M68 453h0M66 453h0M67 453h0M66 367h0M138 442h0M208 389h0M187 454h0M191 455h0M223 249h0M18 358h0M18 411h0M162 397h0M165 397h0M20 446h0M194 128h0M168 167h0M204 208h0M122 38h0M121 41h0M60 328h0M61 330h0M93 366h0M94 366h0M93 366h0M143 362h0M145 362h0M125 336h0M4 369h0M2 367h0M85 407h0M210 293h0M29 92h0M200 424h0M224 411h0M203 115h0M191 90h0M41 41h0M109 251h0M220 103h0M176 47h0M178 50h0M68 231h0M153 122h0M173 393h0M172 393h0M211 16h0M46 196h0M206 238h0M205 237h0M3 269h0M2 268h0M1 267h0M144 67h0M72 109h0M73 110h0M78 34h0M168 73h0M115 183h0M180 398h0M137 417h0M189 257h0M205 85h0M192 68h0M178 371h0M178 372h0M190 169h0M132 345h0M133 345h0M10 354h0M167 52h0M179 253h0M87 141h0M228 463h0M228 464h0M220 425h0M35 25h0M34 26h0M34 24h0M182 220h0M186 222h0M81 251h0M205 281h0M205 275h0M219 149h0M13 10h0M16 10h0M83 411h0M174 101h0M35 5h0M195 316h0M178 113h0M24 209h0M183 144h0M153 154h0M152 150h0M13 56h0M9 56h0M126 464h0M158 186h0M144 -1h0M216 128h0M218 128h0M217 129h0M36 265h0M70 -1h0M193 375h0M197 255h0M202 255h0M198 255h0M69 71h0M17 220h0M15 223h0M175 377h0M199 279h0M99 380h0M103 261h0M133 402h0M132 402h0M193 222h0M212 383h0M212 383h0M184 106h0M197 203h0M72 82h0M-5 34h0M139 102h0M18 302h0M19 303h0M157 244h0M163 122h0M39 190h0M38 189h0M108 453h0M47 35h0M3 316h0M1 315h0M138 232h0M160 249h0M156 248h0M36 395h0M57 76h0M90 432h0M161 178h0M163 177h0M216 335h0M39 458h0M40 456h0M207 212h0M137 301h0M6 307h0M43 373h0M205 191h0M69 157h0M-2 328h0M67 446h0M3 416h0M17 343h0M17 344h0M20 48h0M105 215h0M108 214h0M77 423h0M73 422h0M219 392h0M166 247h0M115 258h0M115 261h0M115 259h0M46 128h0M46 127h0M207 294h0M208 293h0M208 291h0M79 159h0M76 159h0M160 193h0M162 193h0M160 193h0M96 458h0M191 273h0M33 377h0M5 333h0M23 227h0M82 202h0M36 172h0M85 175h0M147 182h0M117 392h0M116 395h0M197 204h0M201 204h0M189 459h0M8 268h0M83 0h0M84 1h0M143 462h0M142 464h0M145 460h0M215 205h0M145 244h0M159 278h0M136 126h0M186 150h0M186 152h0M36 110h0M18 43h0M223 204h0M221 205h0M79 299h0M65 238h0M29 258h0M72 98h0M137 452h0M39 52h0M205 431h0M49 271h0M44 1h0M42 0h0M193 461h0M77 442h0M77 440h0M54 86h0M126 457h0M-1 36h0M41 124h0M39 124h0M101 340h0M219 139h0M218 143h0M147 409h0M44 280h0M129 219h0M129 219h0M44 432h0M45 433h0M52 254h0M52 256h0M170 223h0M173 223h0M88 178h0M136 121h0M138 121h0M109 10h0M207 148h0M210 153h0M30 89h0M144 50h0M142 49h0M144 49h0M196 270h0M202 147h0M95 451h0M94 451h0M91 452h0M66 396h0M108 79h0M76 51h0M72 51h0M52 380h0M224 387h0M142 156h0M167 205h0M167 204h0M142 177h0M108 316h0M194 305h0M195 306h0M72 65h0M75 60h0M199 273h0M73 436h0M224 349h0M166 226h0M165 229h0M226 249h0M224 250h0M212 53h0M120 160h0M94 324h0M140 195h0M32 392h0M34 395h0M38 367h0M51 410h0M13 133h0M14 130h0M12 19h0M96 147h0M56 161h0M69 18h0M50 460h0M74 150h0M77 147h0M173 23h0M174 21h0M226 339h0M163 39h0M49 432h0M49 434h0M95 435h0M95 434h0M72 164h0M71 164h0M73 163h0M26 302h0M190 184h0M192 188h0M62 331h0M62 329h0M219 197h0M41 25h0M141 203h0M25 459h0M24 462h0M139 300h0M222 336h0M123 153h0M120 151h0M122 153h0M34 302h0M96 391h0M104 295h0M70 312h0M179 22h0M5 132h0M5 133h0M130 444h0M132 443h0M-3 276h0M-3 278h0M36 425h0M167 128h0M167 131h0M55 428h0M56 426h0M130 337h0M93 216h0M28 189h0M92 424h0M65 26h0M170 313h0M170 313h0M0 371h0M92 228h0M82 269h0M80 267h0M42 363h0M44 364h0M151 441h0M102 421h0M1 368h0M177 314h0M189 64h0M189 66h0M159 153h0M144 311h0M32 357h0M223 287h0M222 289h0M163 22h0M41 192h0M75 314h0M43 431h0M216 327h0M13 372h0M67 16h0M1 5h0M1 5h0M52 466h0M87 94h0M197 338h0M13 384h0M160 290h0M161 288h0M159 287h0M176 225h0M45 40h0M41 41h0M44 39h0M3 439h0M49 50h0M47 51h0M48 50h0M92 389h0M92 389h0M43 280h0M42 280h0M82 101h0M55 366h0M39 101h0M40 101h0M99 363h0M113 291h0M177 383h0M164 142h0M84 344h0M135 106h0M138 108h0M99 437h0M74 35h0M113 91h0M187 14h0M44 89h0M64 70h0M58 318h0M58 316h0M158 236h0M82 440h0M4 252h0M46 190h0M206 315h0M76 350h0M76 350h0M143 49h0M205 242h0M201 443h0M182 133h0M104 287h0M105 288h0M219 456h0M55 318h0M47 305h0M132 7h0M133 6h0M137 -3h0M138 -3h0M137 -2h0M210 153h0M80 421h0M215 339h0M222 427h0M222 425h0M49 435h0M148 353h0M193 116h0M113 170h0M24 345h0M46 31h0M160 393h0M129 240h0M128 240h0M135 288h0M132 289h0M112 2h0M111 0h0M157 98h0M114 102h0M178 339h0M48 57h0M51 55h0M117 105h0M112 161h0M61 422h0M34 314h0M214 100h0M167 37h0M187 68h0M186 67h0M188 408h0M190 193h0M190 193h0M-2 79h0M59 109h0M175 165h0M173 166h0M27 270h0M29 270h0M130 362h0M128 362h0M39 154h0M89 320h0M94 304h0M218 403h0M149 351h0M221 261h0M-2 188h0M49 215h0M76 412h0M74 412h0M71 411h0M40 72h0M37 93h0M192 41h0M189 41h0M147 343h0M148 343h0M146 340h0M227 344h0M183 280h0M184 280h0M107 251h0M65 34h0M180 422h0M49 157h0M47 159h0M46 158h0M189 79h0M150 151h0M144 54h0M210 179h0M162 354h0M96 198h0M77 124h0M69 324h0M133 57h0M199 150h0M53 405h0M125 247h0M35 330h0M111 218h0M181 212h0M86 447h0M127 121h0M179 44h0M216 220h0M2 431h0M202 120h0M176 434h0M184 357h0M80 179h0M128 347h0M167 385h0M168 294h0M179 34h0M52 269h0M37 223h0M42 174h0M177 425h0M3 129h0M209 72h0M158 179h0M38 24h0M203 170h0M208 416h0M88 274h0M64 221h0M42 184h0M97 427h0M215 366h0M57 139h0M185 390h0M112 30h0M67 234h0M97 401h0M104 33h0M188 329h0M218 48h0M187 42h0M46 207h0M207 305h0M199 36h0M219 413h0M197 368h0M80 126h0M93 106h0M35 346h0M106 370h0M140 54h0M38 60h0M12 420h0M220 5h0M145 459h0M155 71h0M221 11h0M42 151h0M2 395h0M85 169h0M1 63h0M217 197h0M5 389h0M114 76h0M209 109h0M69 266h0M87 322h0M45 229h0M105 82h0M186 210h0M19 130h0M4 448h0M109 430h0M119 173h0M12 23h0M113 424h0M218 410h0M209 197h0M171 376h0M72 157h0M90 305h0M206 198h0M55 432h0M169 162h0M111 212h0M61 391h0M202 207h0M69 458h0M81 125h0M117 211h0M206 198h0M33 83h0M57 416h0M22 130h0M207 209h0M197 366h0M23 404h0M171 102h0M49 411h0M124 311h0M24 227h0M212 45h0M130 82h0M15 339h0M199 458h0M131 356h0M127 4h0M10 80h0M97 415h0M95 332h0M38 292h0M29 115h0M149 220h0M173 184h0M84 180h0M158 204h0M91 328h0M187 330h0M121 147h0M159 308h0M22 300h0M108 17h0M140 259h0M7 268h0M20 334h0M164 208h0M107 336h0M147 280h0M37 379h0M180 450h0M17 334h0M70 72h0M179 335h0M112 283h0M116 408h0M143 181h0M140 172h0M75 85h0M22 378h0M10 459h0M201 292h0M173 74h0M23 42h0M5 226h0M156 238h0M143 177h0M82 7h0M108 152h0M164 415h0M210 122h0M20 187h0M211 383h0M203 122h0M200 267h0M198 152h0M5 269h0M139 399h0M5 201h0M93 277h0" stroke-width="4"/>
<path d="M94 -2h0M221 190h0M142 2h0M116 105h0M180 118h0M6 158h0M2 158h0M65 144h0M19 240h0M20 238h0M121 307h0M2 179h0M117 213h0M59 374h0M206 68h0M204 71h0M24 198h0M196 11h0M105 284h0M35 69h0M72 114h0M17 439h0M147 294h0M78 435h0M20 337h0M84 122h0M183 239h0M96 442h0M77 449h0M41 101h0M29 270h0M5 438h0M179 57h0M48 166h0M70 274h0M71 272h0M208 332h0M209 335h0M130 237h0M225 2h0M113 323h0M111 324h0M123 438h0M185 324h0M87 305h0M87 309h0M221 390h0M222 388h0M183 408h0M222 40h0M209 425h0M169 83h0M179 440h0M179 442h0M152 39h0M186 293h0M188 291h0M198 380h0M214 100h0M8 380h0M5 379h0M83 271h0M195 186h0M27 152h0M94 180h0M9 88h0M81 260h0M54 326h0M53 325h0M164 311h0M103 252h0M6 228h0M70 86h0M211 460h0M140 128h0M-3 162h0M134 218h0M72 375h0M109 89h0M75 193h0M165 288h0M156 233h0M155 234h0M77 262h0M75 260h0M114 196h0M187 215h0M16 209h0M41 42h0M39 42h0M225 444h0M216 196h0M214 194h0M217 195h0M75 73h0M103 299h0M226 381h0M146 413h0M77 301h0M127 286h0M92 123h0M178 142h0M195 222h0M154 297h0M8 415h0M165 324h0M164 326h0M135 285h0M133 285h0M133 285h0M202 303h0M12 217h0M196 285h0M214 182h0M188 284h0M193 283h0M193 284h0M158 356h0M186 469h0M47 249h0M169 30h0M117 295h0M133 179h0M116 205h0M107 96h0M20 288h0M129 262h0M129 259h0M117 223h0M118 222h0M117 173h0M189 182h0M130 105h0M130 106h0M221 271h0M221 273h0M139 77h0M15 61h0M2 71h0M0 73h0M185 161h0M186 163h0M57 387h0M40 138h0M107 312h0M181 283h0M179 142h0M184 143h0M29 130h0M45 166h0M48 164h0M69 311h0M159 374h0M199 297h0M204 298h0M141 244h0M141 246h0M186 325h0M208 221h0M5 240h0M5 244h0M141 200h0M33 180h0M199 158h0M36 352h0M142 407h0M204 358h0M222 341h0M71 328h0M39 158h0M94 306h0M2 317h0M185 21h0M173 461h0M218 309h0M134 88h0M211 199h0M131 346h0M93 33h0M43 15h0M129 95h0M125 451h0M30 77h0M33 78h0M30 78h0M43 100h0M179 82h0M76 133h0M25 132h0M127 68h0M112 88h0M115 88h0M209 191h0M19 11h0M127 218h0M99 16h0M145 142h0M108 149h0M111 150h0M18 0h0M19 199h0M31 239h0M29 235h0M125 254h0M88 285h0M91 285h0M69 245h0M38 379h0M141 403h0M76 360h0M22 155h0M23 157h0M81 335h0M73 352h0M71 353h0M205 167h0M194 465h0M190 466h0M192 466h0M183 52h0M144 315h0M143 316h0M12 459h0M30 252h0M179 -1h0M110 60h0M107 59h0M111 58h0M106 138h0M220 94h0M194 398h0M41 63h0M41 61h0M13 -3h0M12 -1h0M15 408h0M42 440h0M120 261h0M184 39h0M201 371h0M201 368h0M184 314h0M154 131h0M21 355h0M195 466h0M97 145h0M197 333h0M199 331h0M219 265h0M156 57h0M206 289h0M77 169h0M86 374h0M187 140h0M76 16h0M100 86h0M98 89h0M209 137h0M208 135h0M136 164h0M-0 301h0M56 138h0M95 316h0M45 201h0M157 369h0M157 370h0M51 347h0M53 347h0M82 435h0M139 21h0M137 21h0M4 151h0M39 408h0M183 446h0M174 318h0M80 162h0M125 268h0M13 20h0M59 315h0M60 316h0M201 445h0M146 206h0M145 432h0M15 444h0M123 120h0M78 350h0M215 371h0M170 66h0M170 68h0M87 125h0M26 111h0M29 113h0M210 414h0M67 164h0M67 164h0M15 314h0M77 281h0M182 422h0M185 426h0M125 381h0M95 453h0M-2 177h0M83 150h0M86 150h0M30 267h0M66 146h0M39 239h0M39 238h0M140 328h0M140 328h0M136 329h0M182 200h0M181 203h0M183 424h0M120 13h0M183 175h0M181 173h0M218 2h0M195 293h0M21 52h0M102 453h0M105 451h0M32 135h0M37 269h0M5 303h0M163 84h0M165 85h0M77 23h0M218 414h0M137 239h0M135 325h0M135 326h0M18 149h0M17 144h0M132 290h0M137 289h0M123 445h0M182 27h0M205 179h0M41 355h0M132 369h0M131 365h0M102 377h0M100 157h0M214 250h0M211 249h0M19 359h0M19 359h0M60 252h0M57 249h0M37 332h0M75 122h0M132 212h0M224 378h0M64 100h0M76 460h0M106 192h0M218 150h0M215 434h0M22 177h0M178 311h0M134 184h0M16 349h0M187 157h0M26 65h0M117 216h0M122 217h0M37 222h0M38 222h0M37 198h0M183 326h0M147 166h0M117 452h0M-1 62h0M82 266h0M171 78h0M163 19h0M167 397h0M179 377h0M113 86h0M110 84h0M56 450h0M55 450h0M161 451h0M222 37h0M26 294h0M25 292h0M179 272h0M216 368h0M215 369h0M204 351h0M11 253h0M223 78h0M220 74h0M218 79h0M46 325h0M48 328h0M65 252h0M66 252h0M153 42h0M171 373h0M104 37h0M103 34h0M227 267h0M93 436h0M137 342h0M215 321h0M156 346h0M194 428h0M196 426h0M219 1h0M75 103h0M189 275h0M23 400h0M38 328h0M146 207h0M123 378h0M36 8h0M38 12h0M180 411h0M127 330h0M182 428h0M171 284h0M75 194h0M164 339h0M88 418h0M101 335h0M209 425h0M138 118h0M62 185h0M55 187h0M121 4h0M118 4h0M59 403h0M60 407h0M59 403h0M219 263h0M120 159h0M224 1h0M18 60h0M44 461h0M43 463h0M112 69h0M110 73h0M80 359h0M125 105h0M69 113h0M19 349h0M138 118h0M103 198h0M57 38h0M140 59h0M79 74h0M83 73h0M13 373h0M92 392h0M94 2h0M93 45h0M105 22h0M105 21h0M157 404h0M26 354h0M137 232h0M138 230h0M43 137h0M93 309h0M94 311h0M186 288h0M199 68h0M51 39h0M54 79h0M50 76h0M51 78h0M176 103h0M127 346h0M11 243h0M23 171h0M186 219h0M60 461h0M64 459h0M149 293h0M71 259h0M-3 283h0M-5 284h0M185 115h0M188 117h0M22 334h0M22 334h0M172 51h0M173 435h0M173 435h0M-3 381h0M184 391h0M156 445h0M221 -1h0M220 -1h0M98 81h0M121 59h0M8 437h0M213 136h0M195 353h0M195 353h0M10 262h0M217 183h0M216 182h0M26 191h0M218 304h0M218 300h0M133 329h0M125 301h0M29 34h0M20 411h0M22 410h0M149 379h0M19 450h0M186 412h0M187 442h0M147 422h0M146 422h0M202 210h0M34 135h0M63 328h0M146 361h0M4 367h0M81 259h0M34 74h0M34 75h0M83 408h0M57 184h0M157 144h0M94 133h0M12 211h0M109 48h0M166 62h0M222 412h0M178 238h0M56 34h0M32 214h0M67 236h0M63 288h0M42 20h0M39 330h0M145 90h0M143 89h0M16 256h0M23 120h0M50 49h0M49 53h0M35 33h0M-0 402h0M153 288h0M70 235h0M172 396h0M102 359h0M30 233h0M205 236h0M144 66h0M144 64h0M118 446h0M83 230h0M86 231h0M83 229h0M168 69h0M116 183h0M114 183h0M24 94h0M104 441h0M179 400h0M180 397h0M208 83h0M186 55h0M177 373h0M213 461h0M215 462h0M116 219h0M127 77h0M128 75h0M128 75h0M214 285h0M212 283h0M221 187h0M223 184h0M101 8h0M222 322h0M13 97h0M66 418h0M64 415h0M225 147h0M25 265h0M10 97h0M43 329h0M36 164h0M93 105h0M93 107h0M79 252h0M117 104h0M50 384h0M47 22h0M58 148h0M139 181h0M181 119h0M27 211h0M47 255h0M11 56h0M145 -6h0M38 264h0M114 305h0M51 279h0M192 298h0M-4 434h0M-3 437h0M86 191h0M220 33h0M111 69h0M174 381h0M198 278h0M105 381h0M170 151h0M137 56h0M191 222h0M107 320h0M105 318h0M136 230h0M158 312h0M163 307h0M159 308h0M135 217h0M28 26h0M195 197h0M199 199h0M72 80h0M-3 33h0M183 84h0M67 15h0M40 190h0M212 23h0M108 276h0M109 278h0M204 122h0M194 441h0M117 83h0M116 79h0M113 82h0M141 233h0M140 232h0M173 444h0M107 446h0M105 446h0M97 153h0M215 337h0M215 336h0M-0 187h0M214 362h0M215 362h0M217 365h0M51 216h0M135 298h0M135 299h0M180 204h0M180 206h0M24 349h0M6 264h0M3 262h0M91 224h0M90 223h0M72 157h0M155 328h0M206 277h0M4 415h0M21 52h0M21 47h0M107 213h0M118 193h0M120 194h0M146 356h0M143 356h0M145 359h0M20 211h0M17 368h0M99 459h0M151 258h0M177 165h0M63 97h0M63 96h0M16 223h0M64 208h0M84 173h0M89 177h0M169 87h0M77 55h0M30 168h0M202 169h0M15 127h0M170 59h0M226 267h0M178 404h0M161 150h0M163 151h0M6 267h0M5 268h0M218 40h0M217 306h0M36 142h0M152 168h0M36 430h0M36 109h0M39 111h0M79 110h0M81 106h0M19 39h0M176 230h0M89 14h0M90 18h0M8 343h0M210 389h0M208 391h0M175 323h0M70 297h0M114 325h0M58 222h0M72 205h0M4 4h0M70 98h0M72 97h0M111 212h0M153 11h0M154 9h0M21 212h0M22 209h0M140 453h0M19 400h0M15 402h0M-2 252h0M113 382h0M8 429h0M8 430h0M10 433h0M38 52h0M138 25h0M139 24h0M185 104h0M186 103h0M42 3h0M192 459h0M192 460h0M116 301h0M186 237h0M194 97h0M196 94h0M39 126h0M53 331h0M202 386h0M10 242h0M139 134h0M100 242h0M70 294h0M206 215h0M167 422h0M83 198h0M83 198h0M93 441h0M82 107h0M129 222h0M207 403h0M203 409h0M23 34h0M108 47h0M106 44h0M122 4h0M62 4h0M84 7h0M84 9h0M82 11h0M164 393h0M168 392h0M130 279h0M133 392h0M75 337h0M35 69h0M48 118h0M73 50h0M53 382h0M217 455h0M53 204h0M151 266h0M211 426h0M134 336h0M73 62h0M196 274h0M197 276h0M194 108h0M192 108h0M165 228h0M211 59h0M77 409h0M167 123h0M166 393h0M179 364h0M177 363h0M102 351h0M125 4h0M54 193h0M49 408h0M83 173h0M76 278h0M121 57h0M147 179h0M5 349h0M6 348h0M144 356h0M45 409h0M166 455h0M16 330h0M146 421h0M5 325h0M227 410h0M67 205h0M93 116h0M161 39h0M162 39h0M15 221h0M103 157h0M101 154h0M93 435h0M193 186h0M63 329h0M39 164h0M216 132h0M144 274h0M38 27h0M94 170h0M27 462h0M226 255h0M36 304h0M34 305h0M95 391h0M177 153h0M177 190h0M7 132h0M140 122h0M142 122h0M196 212h0M198 193h0M200 192h0M29 181h0M53 216h0M166 129h0M50 84h0M185 41h0M168 45h0M134 339h0M151 314h0M192 329h0M109 460h0M57 130h0M75 115h0M10 205h0M27 8h0M25 6h0M90 381h0M2 369h0M51 340h0M50 338h0M212 425h0M61 71h0M167 26h0M137 305h0M138 305h0M79 349h0M79 351h0M78 350h0M99 101h0M188 65h0M132 324h0M80 79h0M8 399h0M117 332h0M153 315h0M91 40h0M214 181h0M216 180h0M217 179h0M142 313h0M77 5h0M136 401h0M136 396h0M32 356h0M50 32h0M165 103h0M163 103h0M167 24h0M67 236h0M41 191h0M44 434h0M43 432h0M58 206h0M57 207h0M56 206h0M42 224h0M128 438h0M128 440h0M32 321h0M54 468h0M52 204h0M180 246h0M176 244h0M175 225h0M92 157h0M92 152h0M91 153h0M180 263h0M57 457h0M55 456h0M54 458h0M1 441h0M145 439h0M40 387h0M138 91h0M138 88h0M173 394h0M86 104h0M147 94h0M57 369h0M137 378h0M59 364h0M112 291h0M217 27h0M165 139h0M54 229h0M82 341h0M102 366h0M210 383h0M155 242h0M75 34h0M75 36h0M153 351h0M153 352h0M58 270h0M59 315h0M155 235h0M122 14h0M45 -0h0M47 -0h0M4 253h0M81 322h0M34 42h0M25 248h0M23 246h0M35 351h0M206 242h0M202 305h0M203 305h0M206 445h0M203 444h0M131 44h0M206 440h0M180 454h0M86 120h0M180 120h0M188 13h0M58 320h0M56 319h0M136 100h0M133 102h0M39 377h0M39 375h0M79 421h0M80 423h0M121 235h0M170 313h0M6 141h0M7 146h0M102 341h0M115 170h0M44 33h0M171 253h0M57 306h0M107 226h0M109 227h0M105 329h0M159 99h0M139 455h0M173 410h0M177 338h0M47 58h0M6 203h0M112 225h0M102 347h0M112 164h0M62 302h0M102 101h0M207 15h0M35 315h0M-3 240h0M139 147h0M88 -2h0M90 -1h0M166 310h0M169 310h0M169 310h0M58 110h0M83 286h0M45 120h0M27 45h0M32 48h0M33 49h0M130 359h0M193 71h0M42 153h0M43 152h0M158 143h0M200 202h0M96 301h0M93 302h0M147 351h0M-1 172h0M89 283h0M21 400h0M21 399h0M189 42h0M227 345h0M224 346h0M80 101h0M79 104h0M83 82h0M86 83h0M82 83h0M102 134h0" stroke-width="5"/>
<path d="M140 4h0M55 192h0M52 189h0M119 70h0M3 179h0M126 370h0M125 367h0M208 266h0M210 269h0M206 266h0M194 7h0M166 9h0M127 367h0M93 193h0M14 441h0M184 137h0M77 451h0M76 448h0M40 100h0M111 82h0M112 77h0M125 358h0M28 271h0M130 236h0M114 324h0M40 174h0M44 171h0M116 443h0M198 462h0M199 464h0M41 253h0M1 310h0M167 84h0M150 38h0M208 331h0M130 283h0M178 192h0M212 403h0M161 50h0M8 88h0M8 87h0M79 259h0M66 432h0M53 326h0M24 319h0M5 309h0M2 308h0M47 120h0M13 215h0M208 465h0M147 464h0M166 322h0M133 214h0M72 378h0M75 193h0M113 316h0M66 130h0M140 313h0M75 259h0M140 254h0M41 44h0M93 84h0M201 394h0M202 391h0M104 299h0M192 151h0M59 280h0M58 275h0M4 152h0M177 98h0M54 283h0M89 123h0M15 404h0M152 299h0M59 317h0M64 311h0M-0 454h0M113 394h0M214 179h0M124 415h0M167 35h0M131 177h0M212 346h0M151 462h0M20 292h0M117 174h0M190 183h0M191 178h0M202 351h0M194 350h0M42 358h0M37 358h0M40 356h0M0 73h0M119 410h0M59 385h0M58 434h0M55 438h0M129 369h0M129 368h0M182 252h0M46 141h0M181 285h0M181 141h0M-3 87h0M-1 80h0M161 374h0M197 295h0M188 325h0M65 217h0M3 424h0M3 424h0M101 459h0M100 460h0M199 160h0M38 353h0M38 351h0M8 99h0M145 404h0M141 403h0M98 254h0M-2 153h0M72 331h0M134 319h0M15 62h0M191 262h0M156 244h0M22 364h0M1 319h0M-0 320h0M33 256h0M32 255h0M93 195h0M93 193h0M130 88h0M195 302h0M125 450h0M116 89h0M17 110h0M18 113h0M15 109h0M211 190h0M28 152h0M27 149h0M26 149h0M26 184h0M121 253h0M89 286h0M140 56h0M66 244h0M142 404h0M74 360h0M33 122h0M84 291h0M80 290h0M81 291h0M22 155h0M83 339h0M22 200h0M188 359h0M187 79h0M187 80h0M219 396h0M181 -7h0M17 424h0M222 93h0M224 90h0M179 271h0M66 244h0M36 294h0M85 78h0M86 81h0M119 441h0M122 442h0M180 41h0M205 369h0M156 57h0M156 65h0M157 61h0M77 185h0M129 79h0M76 171h0M157 322h0M211 135h0M135 163h0M133 258h0M199 418h0M-4 19h0M-1 20h0M1 22h0M189 411h0M199 264h0M1 150h0M3 148h0M93 35h0M126 238h0M155 381h0M152 313h0M130 23h0M18 20h0M3 410h0M6 407h0M182 334h0M201 443h0M192 79h0M74 66h0M149 122h0M171 65h0M78 67h0M116 371h0M68 163h0M-2 221h0M57 367h0M56 366h0M23 384h0M88 364h0M99 209h0M99 147h0M136 384h0M157 393h0M175 6h0M113 464h0M160 179h0M12 13h0M39 353h0M43 354h0M98 157h0M213 247h0M206 20h0M206 24h0M76 122h0M104 190h0M145 381h0M215 433h0M174 311h0M172 311h0M32 209h0M30 207h0M4 373h0M13 349h0M116 219h0M38 199h0M39 199h0M148 44h0M200 46h0M180 327h0M183 328h0M96 54h0M170 78h0M173 76h0M111 298h0M202 122h0M102 196h0M101 197h0M149 373h0M169 266h0M160 449h0M198 420h0M56 281h0M68 22h0M69 27h0M215 38h0M220 36h0M-3 283h0M69 270h0M164 159h0M177 88h0M176 87h0M179 89h0M225 3h0M-4 125h0M197 300h0M144 126h0M142 125h0M121 318h0M25 400h0M149 206h0M158 298h0M108 103h0M156 260h0M205 376h0M171 283h0M3 94h0M5 96h0M8 97h0M195 230h0M205 375h0M2 461h0M-2 464h0M139 117h0M63 184h0M54 186h0M119 5h0M16 251h0M217 263h0M122 159h0M33 116h0M41 463h0M79 356h0M78 358h0M206 99h0M182 369h0M158 403h0M68 114h0M201 69h0M4 106h0M211 319h0M173 104h0M14 245h0M115 123h0M24 174h0M25 303h0M183 391h0M160 446h0M170 144h0M101 79h0M213 134h0M210 136h0M105 22h0M17 125h0M77 299h0M132 333h0M128 329h0M136 413h0M69 -1h0M135 64h0M40 295h0M17 358h0M32 34h0M136 376h0M163 396h0M121 165h0M5 116h0M27 434h0M202 210h0M69 28h0M69 28h0M68 28h0M169 432h0M67 410h0M81 261h0M82 260h0M34 73h0M63 459h0M95 126h0M109 46h0M197 425h0M55 29h0M34 217h0M31 215h0M70 235h0M86 285h0M83 286h0M40 328h0M69 234h0M44 269h0M204 426h0M101 359h0M118 445h0M102 269h0M101 269h0M-4 187h0M146 114h0M133 114h0M123 203h0M100 160h0M144 5h0M144 7h0M50 2h0M109 91h0M140 224h0M188 18h0M225 144h0M80 115h0M171 129h0M25 264h0M28 266h0M205 275h0M84 413h0M82 414h0M49 24h0M203 141h0M1 339h0M0 336h0M9 19h0M155 189h0M56 313h0M55 311h0M190 297h0M30 70h0M136 251h0M131 255h0M52 177h0M189 426h0M14 219h0M172 147h0M140 53h0M225 432h0M-2 325h0M2 321h0M182 84h0M65 21h0M28 459h0M108 278h0M203 121h0M158 248h0M101 148h0M103 278h0M4 273h0M186 282h0M209 211h0M24 353h0M1 452h0M156 331h0M175 414h0M135 311h0M18 23h0M65 36h0M77 426h0M17 372h0M121 255h0M96 459h0M190 272h0M184 325h0M138 49h0M64 205h0M33 173h0M170 85h0M35 94h0M202 317h0M201 320h0M119 102h0M121 103h0M203 175h0M161 152h0M220 37h0M219 37h0M36 147h0M89 88h0M92 84h0M155 170h0M16 42h0M89 14h0M7 342h0M207 389h0M210 223h0M180 320h0M125 64h0M222 205h0M115 328h0M80 300h0M80 301h0M68 203h0M72 204h0M32 263h0M30 259h0M162 263h0M138 26h0M163 256h0M13 45h0M11 42h0M80 443h0M126 456h0M54 440h0M53 436h0M92 362h0M186 80h0M103 343h0M9 243h0M135 132h0M208 217h0M207 217h0M45 272h0M91 389h0M94 389h0M81 193h0M79 197h0M78 194h0M107 45h0M123 1h0M155 42h0M151 41h0M78 60h0M209 151h0M106 79h0M15 446h0M-0 213h0M51 381h0M212 428h0M133 336h0M208 58h0M210 313h0M208 314h0M149 224h0M212 57h0M176 204h0M178 199h0M178 200h0M181 403h0M91 368h0M88 366h0M104 351h0M122 6h0M122 4h0M46 278h0M39 367h0M49 409h0M13 130h0M14 21h0M12 21h0M19 142h0M21 148h0M122 55h0M145 178h0M5 350h0M146 356h0M166 456h0M13 331h0M14 331h0M148 417h0M64 206h0M116 44h0M24 303h0M37 167h0M218 136h0M214 131h0M30 447h0M210 154h0M191 165h0M190 162h0M73 271h0M178 152h0M179 153h0M171 187h0M199 214h0M198 210h0M-1 132h0M-0 135h0M55 215h0M15 384h0M185 36h0M172 49h0M152 318h0M57 127h0M56 127h0M95 292h0M2 367h0M47 340h0M159 281h0M18 10h0M17 7h0M167 26h0M138 305h0M98 303h0M98 303h0M45 443h0M134 324h0M9 402h0M157 320h0M143 314h0M74 71h0M163 103h0M140 443h0M89 188h0M31 262h0M30 260h0M180 192h0M41 227h0M42 228h0M127 441h0M55 463h0M183 66h0M193 339h0M54 205h0M79 302h0M123 242h0M137 32h0M152 238h0M143 439h0M77 230h0M144 95h0M55 366h0M63 367h0M60 365h0M119 5h0M99 195h0M99 194h0M115 287h0M206 14h0M210 15h0M-4 148h0M92 196h0M33 83h0M152 349h0M168 238h0M154 237h0M45 1h0M80 323h0M132 42h0M39 110h0M168 314h0M206 438h0M207 434h0M131 323h0M134 326h0M33 173h0M34 174h0M160 270h0M160 272h0M180 121h0M179 119h0M150 62h0M46 95h0M12 415h0M12 54h0M173 113h0M196 411h0M59 442h0M216 83h0M90 88h0M41 444h0M219 324h0M47 31h0M36 250h0M39 250h0M61 306h0M81 374h0M29 133h0M140 455h0M138 458h0M38 102h0M175 412h0M173 410h0M204 287h0M207 285h0M5 202h0M112 160h0M107 378h0M50 363h0M122 197h0M123 193h0M206 16h0M-1 238h0M-6 240h0M88 131h0M165 37h0M188 66h0M196 91h0M58 110h0M140 6h0M82 285h0M16 327h0M219 262h0M60 116h0M220 112h0M220 113h0M91 280h0M182 281h0M173 365h0M115 372h0M116 370h0M114 373h0M180 419h0" stroke-width="6"/>
<path d="M90 1h0M202 267h0M221 460h0M32 340h0M35 338h0M34 316h0M31 316h0M168 8h0M167 426h0M7 439h0M32 407h0M28 275h0M210 330h0M183 409h0M5 315h0M177 347h0M211 329h0M178 192h0M212 403h0M214 404h0M67 241h0M21 323h0M106 142h0M212 464h0M167 322h0M139 218h0M116 319h0M67 135h0M62 130h0M207 210h0M102 318h0M32 291h0M75 76h0M83 367h0M6 154h0M4 154h0M83 49h0M55 288h0M89 123h0M174 144h0M14 410h0M13 407h0M202 303h0M204 301h0M215 185h0M128 413h0M115 208h0M20 293h0M80 76h0M205 43h0M70 315h0M188 326h0M102 460h0M158 295h0M158 300h0M123 68h0M198 158h0M174 35h0M97 306h0M157 239h0M155 246h0M178 248h0M151 106h0M37 466h0M23 140h0M27 139h0M22 9h0M96 16h0M37 77h0M122 256h0M33 121h0M2 415h0M186 79h0M130 205h0M17 426h0M82 442h0M180 269h0M179 266h0M63 244h0M40 39h0M87 77h0M47 196h0M5 257h0M152 129h0M194 461h0M194 463h0M97 144h0M220 262h0M222 261h0M154 65h0M77 169h0M187 143h0M134 166h0M199 265h0M44 203h0M129 237h0M161 68h0M13 21h0M152 119h0M149 119h0M77 279h0M-5 213h0M-3 216h0M106 431h0M31 267h0M46 152h0M44 153h0M206 393h0M206 393h0M205 392h0M67 146h0M153 362h0M221 5h0M47 430h0M29 137h0M133 324h0M158 392h0M15 148h0M223 328h0M161 178h0M159 179h0M181 27h0M155 140h0M103 374h0M103 380h0M76 459h0M74 461h0M145 381h0M25 200h0M27 66h0M147 48h0M204 123h0M150 368h0M163 446h0M108 104h0M69 268h0M145 226h0M154 41h0M162 163h0M220 2h0M27 200h0M27 200h0M90 439h0M94 433h0M218 348h0M192 278h0M158 293h0M162 296h0M109 102h0M109 103h0M151 261h0M202 376h0M207 373h0M137 116h0M133 262h0M64 181h0M107 325h0M110 322h0M121 162h0M68 114h0M21 348h0M17 349h0M137 117h0M55 158h0M55 156h0M71 116h0M38 136h0M124 344h0M123 343h0M113 123h0M111 124h0M72 261h0M187 284h0M99 80h0M218 181h0M218 304h0M12 178h0M134 379h0M134 383h0M118 432h0M65 413h0M68 411h0M63 461h0M176 238h0M42 19h0M38 332h0M51 52h0M173 34h0M150 284h0M23 98h0M126 200h0M96 161h0M64 416h0M141 223h0M225 145h0M8 95h0M34 158h0M53 381h0M85 21h0M182 153h0M0 338h0M100 200h0M101 200h0M189 128h0M220 29h0M220 29h0M185 424h0M173 147h0M139 58h0M186 89h0M10 135h0M187 309h0M190 310h0M77 256h0M22 119h0M50 215h0M50 220h0M4 275h0M4 276h0M186 283h0M189 281h0M22 353h0M-3 451h0M35 316h0M159 231h0M18 370h0M120 256h0M192 270h0M178 167h0M137 49h0M138 52h0M66 204h0M37 94h0M203 318h0M76 52h0M121 102h0M50 81h0M51 81h0M48 464h0M161 8h0M127 68h0M126 68h0M19 401h0M187 102h0M16 43h0M54 438h0M139 379h0M152 451h0M156 454h0M30 136h0M53 336h0M149 424h0M148 426h0M151 424h0M12 243h0M45 272h0M93 389h0M205 406h0M156 40h0M143 96h0M144 96h0M209 425h0M200 455h0M147 307h0M145 126h0M180 361h0M43 280h0M143 358h0M44 407h0M54 300h0M9 328h0M50 186h0M16 221h0M173 8h0M31 444h0M150 252h0M153 253h0M157 254h0M228 252h0M172 189h0M130 444h0M28 346h0M-3 130h0M51 215h0M51 85h0M49 87h0M187 418h0M187 416h0M8 1h0M110 456h0M75 119h0M22 8h0M211 23h0M208 215h0M210 217h0M20 9h0M100 301h0M76 72h0M104 33h0M70 235h0M32 322h0M156 176h0M123 238h0M139 33h0M157 241h0M139 88h0M85 98h0M147 94h0M115 4h0M217 26h0M215 24h0M211 18h0M-3 149h0M36 82h0M30 83h0M108 322h0M188 11h0M47 102h0M178 183h0M173 180h0M14 57h0M13 56h0M171 112h0M198 411h0M193 4h0M58 441h0M176 383h0M36 250h0M104 331h0M112 225h0M220 227h0M50 361h0M121 194h0M34 315h0M38 329h0M195 92h0M139 5h0M158 144h0M156 145h0M201 205h0M14 327h0M222 109h0M166 365h0M169 364h0" stroke-width="7"/>
<path d="M6 161h0M35 342h0M91 192h0M29 275h0M178 346h0M178 188h0M186 289h0M69 240h0M24 320h0M108 144h0M105 144h0M147 464h0M139 256h0M96 90h0M85 366h0M177 99h0M57 288h0M63 311h0M209 341h0M215 345h0M202 359h0M179 253h0M47 142h0M206 42h0M131 88h0M130 90h0M106 377h0M184 275h0M4 420h0M183 49h0M63 244h0M37 288h0M95 318h0M76 279h0M1 302h0M42 151h0M67 146h0M218 1h0M49 123h0M8 301h0M83 36h0M88 40h0M148 207h0M209 21h0M35 332h0M63 257h0M14 350h0M-0 62h0M151 371h0M144 226h0M149 40h0M153 433h0M155 259h0M147 143h0M131 263h0M224 -4h0M153 210h0M200 420h0M40 136h0M202 70h0M177 103h0M30 66h0M31 70h0M197 229h0M199 227h0M87 222h0M85 222h0M135 65h0M185 416h0M175 272h0M52 28h0M22 96h0M103 443h0M143 11h0M106 93h0M143 224h0M38 163h0M-6 436h0M27 459h0M10 133h0M104 160h0M158 230h0M76 328h0M50 81h0M210 172h0M168 61h0M165 64h0M44 466h0M116 325h0M118 383h0M205 146h0M136 134h0M147 304h0M46 261h0M47 260h0M143 125h0M8 224h0M13 381h0M185 420h0M100 31h0M103 34h0M126 242h0M127 179h0M75 235h0M123 13h0M131 329h0M32 175h0M176 179h0M194 2h0M44 439h0M66 106h0M51 359h0M107 100h0M139 204h0" stroke-width="8"/>
  </g></g></g>
</svg>

<!-- attribution -->
<div class="a" style="left:290px;top:516px;width:142px;height:51px;background:#222"></div>
<svg class="a" style="left:410px;top:523px" width="12" height="12">
  <path d="M2.8 2.8 L9.2 9.2 M9.2 2.8 L2.8 9.2" stroke="#8a8a8a" stroke-width="2.2"/>
</svg>
<div class="a" style="left:297px;top:548.7px;font-size:8px;font-weight:bold;color:#eee;letter-spacing:-0.17px">Bibliothèque nationale de France</div>

<!-- navigator -->
<div class="a" style="left:933px;top:488px;width:131px;height:90px;border:1px solid #5a5a5a"></div>
<svg class="a" style="left:970px;top:489px" width="58" height="88">
  <defs>
    <filter color-interpolation-filters="sRGB" id="ms" x="0" y="0" width="100%" height="100%">
      <feTurbulence type="fractalNoise" baseFrequency="0.55" numOctaves="2" seed="5"/>
      <feColorMatrix type="matrix" values="0 0 0 0 0.17  0 0 0 0 0.16  0 0 0 0 0.14  -5 0 0 0 3.3"/>
    </filter>
  </defs>
  <rect x="2" y="0" width="56" height="88" fill="#dedbd3"/>
  <rect x="0" y="3" width="16" height="83.7" fill="#8c8674"/>
  <rect x="16" y="3" width="40.3" height="83.7" fill="#7a6a50"/>
  <rect x="16" y="3" width="40.3" height="83.7" filter="url(#ms)"/>
</svg>



<!-- right panel >> -->
<svg class="a" style="left:1066px;top:50px" width="30" height="25">
  <path d="M7.3 8.7 L10.8 12.1 L7.3 15.5 M13.1 8.7 L16.6 12.1 L13.1 15.5" stroke="#fff" stroke-width="2.2" fill="none"/>
</svg>
<!-- bottom icons -->
<svg class="a" style="left:90px;top:584px" width="55" height="26" viewBox="90 584 55 26">
  <rect x="100.6" y="590" width="3.2" height="5.5" fill="#fff"/>
  <rect x="95" y="598.8" width="14.2" height="5.2" fill="#fff"/>
  <path d="M98.8 598.8 L105.6 598.8 L102.2 601.8Z" fill="#000"/>
  <path d="M97.6 595 L106.8 595 L102.2 600.3Z" fill="#fff"/>
  <rect x="105" y="601.3" width="1.1" height="1.4" fill="#000"/>
  <rect x="107" y="601.3" width="1.1" height="1.4" fill="#000"/>
  <circle cx="135.3" cy="592.7" r="2.9" fill="#fff"/>
  <circle cx="127.4" cy="596.5" r="2.9" fill="#fff"/>
  <circle cx="135.3" cy="600.5" r="2.9" fill="#fff"/>
  <path d="M135.3 592.7 L127.4 596.5 L135.3 600.5" stroke="#fff" stroke-width="1.4" fill="none"/>
</svg>
<svg class="a" style="left:1230px;top:585px" width="25" height="25">
  <path d="M6.4 9.7 V6.2 H9.9 M15.1 6.2 H18.6 V9.7 M18.6 14.3 V17.8 H15.1 M9.9 17.8 H6.4 V14.3" stroke="#fff" stroke-width="2.2" fill="none"/>
</svg>

<!-- red boxes -->
<div class="a red" style="left:1058px;top:184px;width:205px;height:266px"></div>

<!-- BOTTOM METADATA -->
<div class="a bl" style="top:671px">Titre</div>
<div class="a bv" style="top:690.5px;letter-spacing:0.3px">Népal et pays himalayens</div>
<div class="a bl" style="top:716px">Auteur</div>
<div class="a bv bt" style="top:735px">Massieu, Isabelle (1844-1932)<span class="idref" style="margin-left:13px">Plus de contenus sur IdRef</span></div>
<div class="a bl" style="top:761px">Editeur</div>
<div class="a bv bt" style="top:780px;letter-spacing:0.05px">Félix Alcan (Firme) (Paris)<span class="idref" style="margin-left:13px">Plus de contenus sur IdRef</span></div>
<div class="a bl" style="top:806px">Date</div>
<div class="a bv" style="top:825px">1914</div>
<div class="a red" style="left:75px;top:651px;width:470px;height:167px"></div>

<!-- footer bar -->
<div class="a" style="left:0;top:838px;width:1335px;height:8px;background:#123d47;border-top:1px solid #03313a;border-bottom:1px solid #03313a"></div>
<div class="a" style="left:0;top:838px;width:226px;height:8px;background:#3a5c5c;border-top:1px solid #5b7777;border-right:1px solid #5b7777"></div>
<div class="a" style="left:303px;top:838px;width:60px;height:8px;background:#0b7480"></div>
<div class="a" style="left:0;top:846px;width:1335px;height:5px;background:#fff"></div>
</body></html>
